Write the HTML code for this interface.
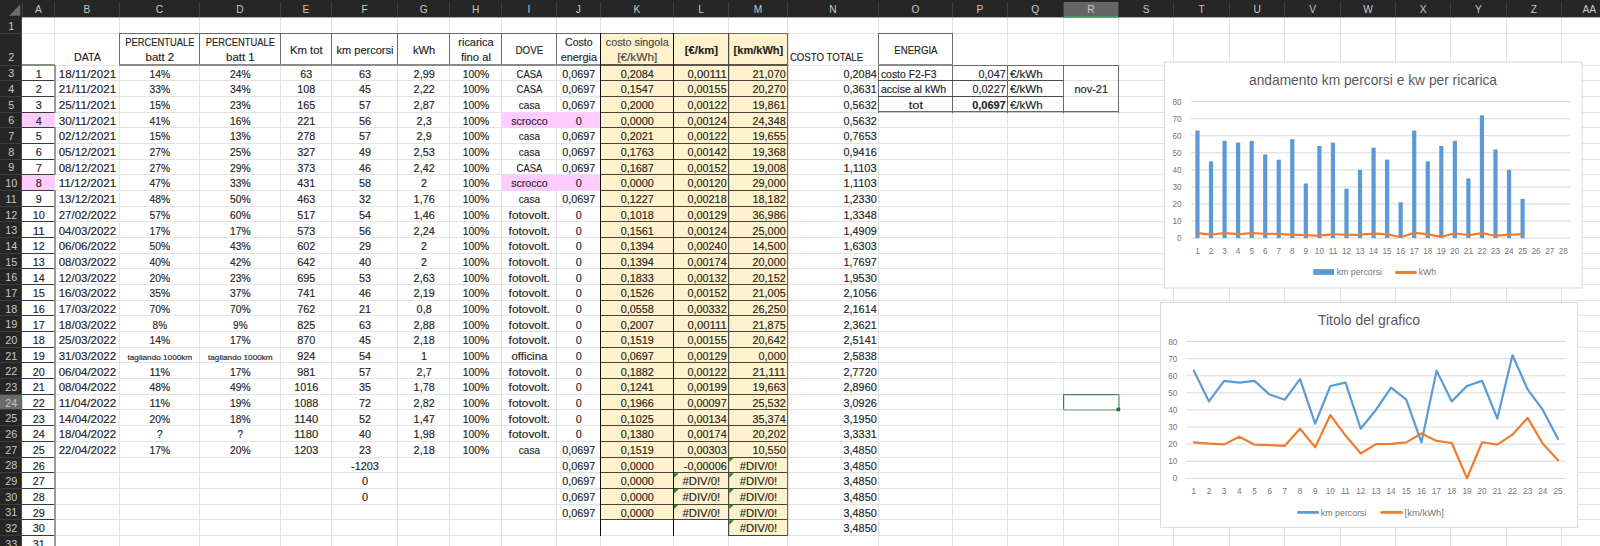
<!DOCTYPE html>
<html><head><meta charset="utf-8"><title>Excel</title><style>html,body{margin:0;padding:0;background:#fff;overflow:hidden;width:1600px;height:546px;font-family:"Liberation Sans",sans-serif}</style></head><body>
<svg width="1600" height="546" viewBox="0 0 1600 546" style="display:block">
<rect x="0" y="0" width="1600" height="546" fill="#ffffff"/>
<rect x="54" y="17" width="1" height="529" fill="#e3e3e3"/><rect x="119" y="17" width="1" height="529" fill="#e3e3e3"/><rect x="199" y="17" width="1" height="529" fill="#e3e3e3"/><rect x="280" y="17" width="1" height="529" fill="#e3e3e3"/><rect x="331" y="17" width="1" height="529" fill="#e3e3e3"/><rect x="397" y="17" width="1" height="529" fill="#e3e3e3"/><rect x="449" y="17" width="1" height="529" fill="#e3e3e3"/><rect x="501" y="17" width="1" height="529" fill="#e3e3e3"/><rect x="556" y="17" width="1" height="529" fill="#e3e3e3"/><rect x="600" y="17" width="1" height="529" fill="#e3e3e3"/><rect x="673" y="17" width="1" height="529" fill="#e3e3e3"/><rect x="728" y="17" width="1" height="529" fill="#e3e3e3"/><rect x="787" y="17" width="1" height="529" fill="#e3e3e3"/><rect x="878" y="17" width="1" height="529" fill="#e3e3e3"/><rect x="952" y="17" width="1" height="529" fill="#e3e3e3"/><rect x="1007" y="17" width="1" height="529" fill="#e3e3e3"/><rect x="1063" y="17" width="1" height="529" fill="#e3e3e3"/><rect x="1118" y="17" width="1" height="529" fill="#e3e3e3"/><rect x="1173" y="17" width="1" height="529" fill="#e3e3e3"/><rect x="1229" y="17" width="1" height="529" fill="#e3e3e3"/><rect x="1284" y="17" width="1" height="529" fill="#e3e3e3"/><rect x="1340" y="17" width="1" height="529" fill="#e3e3e3"/><rect x="1395" y="17" width="1" height="529" fill="#e3e3e3"/><rect x="1450" y="17" width="1" height="529" fill="#e3e3e3"/><rect x="1506" y="17" width="1" height="529" fill="#e3e3e3"/><rect x="1561" y="17" width="1" height="529" fill="#e3e3e3"/><rect x="1617" y="17" width="1" height="529" fill="#e3e3e3"/><rect x="22" y="33" width="1578" height="1" fill="#e3e3e3"/><rect x="22" y="65" width="1578" height="1" fill="#e3e3e3"/><rect x="22" y="80" width="1578" height="1" fill="#e3e3e3"/><rect x="22" y="96" width="1578" height="1" fill="#e3e3e3"/><rect x="22" y="112" width="1578" height="1" fill="#e3e3e3"/><rect x="22" y="127" width="1578" height="1" fill="#e3e3e3"/><rect x="22" y="143" width="1578" height="1" fill="#e3e3e3"/><rect x="22" y="159" width="1578" height="1" fill="#e3e3e3"/><rect x="22" y="174" width="1578" height="1" fill="#e3e3e3"/><rect x="22" y="190" width="1578" height="1" fill="#e3e3e3"/><rect x="22" y="206" width="1578" height="1" fill="#e3e3e3"/><rect x="22" y="221" width="1578" height="1" fill="#e3e3e3"/><rect x="22" y="237" width="1578" height="1" fill="#e3e3e3"/><rect x="22" y="253" width="1578" height="1" fill="#e3e3e3"/><rect x="22" y="268" width="1578" height="1" fill="#e3e3e3"/><rect x="22" y="284" width="1578" height="1" fill="#e3e3e3"/><rect x="22" y="300" width="1578" height="1" fill="#e3e3e3"/><rect x="22" y="315" width="1578" height="1" fill="#e3e3e3"/><rect x="22" y="331" width="1578" height="1" fill="#e3e3e3"/><rect x="22" y="347" width="1578" height="1" fill="#e3e3e3"/><rect x="22" y="362" width="1578" height="1" fill="#e3e3e3"/><rect x="22" y="378" width="1578" height="1" fill="#e3e3e3"/><rect x="22" y="394" width="1578" height="1" fill="#e3e3e3"/><rect x="22" y="409" width="1578" height="1" fill="#e3e3e3"/><rect x="22" y="425" width="1578" height="1" fill="#e3e3e3"/><rect x="22" y="441" width="1578" height="1" fill="#e3e3e3"/><rect x="22" y="457" width="1578" height="1" fill="#e3e3e3"/><rect x="22" y="472" width="1578" height="1" fill="#e3e3e3"/><rect x="22" y="488" width="1578" height="1" fill="#e3e3e3"/><rect x="22" y="504" width="1578" height="1" fill="#e3e3e3"/><rect x="22" y="519" width="1578" height="1" fill="#e3e3e3"/><rect x="22" y="535" width="1578" height="1" fill="#e3e3e3"/><rect x="22" y="551" width="1578" height="1" fill="#e3e3e3"/>
<rect x="600.30" y="33.50" width="187.20" height="486.22" fill="#fff2cc"/>
<rect x="728.50" y="519.72" width="59.00" height="15.68" fill="#fff2cc"/>
<rect x="22.00" y="112.04" width="32.60" height="15.68" fill="#ffccff"/>
<rect x="501.50" y="112.04" width="98.80" height="15.68" fill="#ffccff"/>
<rect x="22.00" y="174.76" width="32.60" height="15.68" fill="#ffccff"/>
<rect x="501.50" y="174.76" width="98.80" height="15.68" fill="#ffccff"/>
<rect x="119" y="33" width="669" height="1" fill="#6a6a6a"/>
<rect x="119" y="33" width="1" height="33" fill="#6a6a6a"/>
<rect x="199" y="33" width="1" height="33" fill="#6a6a6a"/>
<rect x="280" y="33" width="1" height="33" fill="#6a6a6a"/>
<rect x="331" y="33" width="1" height="33" fill="#6a6a6a"/>
<rect x="397" y="33" width="1" height="33" fill="#6a6a6a"/>
<rect x="449" y="33" width="1" height="33" fill="#6a6a6a"/>
<rect x="501" y="33" width="1" height="33" fill="#6a6a6a"/>
<rect x="556" y="33" width="1" height="33" fill="#6a6a6a"/>
<rect x="119" y="64" width="482" height="2" fill="#8a8a8a"/>
<rect x="600" y="64" width="188" height="2" fill="#5c5646"/>
<rect x="600" y="80" width="188" height="1" fill="#45433c"/>
<rect x="600" y="96" width="188" height="1" fill="#45433c"/>
<rect x="600" y="112" width="188" height="1" fill="#45433c"/>
<rect x="600" y="127" width="188" height="1" fill="#45433c"/>
<rect x="600" y="143" width="188" height="1" fill="#45433c"/>
<rect x="600" y="159" width="188" height="1" fill="#45433c"/>
<rect x="600" y="174" width="188" height="1" fill="#45433c"/>
<rect x="600" y="190" width="188" height="1" fill="#45433c"/>
<rect x="600" y="206" width="188" height="1" fill="#45433c"/>
<rect x="600" y="221" width="188" height="1" fill="#45433c"/>
<rect x="600" y="237" width="188" height="1" fill="#45433c"/>
<rect x="600" y="253" width="188" height="1" fill="#45433c"/>
<rect x="600" y="268" width="188" height="1" fill="#45433c"/>
<rect x="600" y="284" width="188" height="1" fill="#45433c"/>
<rect x="600" y="300" width="188" height="1" fill="#45433c"/>
<rect x="600" y="315" width="188" height="1" fill="#45433c"/>
<rect x="600" y="331" width="188" height="1" fill="#45433c"/>
<rect x="600" y="347" width="188" height="1" fill="#45433c"/>
<rect x="600" y="362" width="188" height="1" fill="#45433c"/>
<rect x="600" y="378" width="188" height="1" fill="#45433c"/>
<rect x="600" y="394" width="188" height="1" fill="#45433c"/>
<rect x="600" y="409" width="188" height="1" fill="#45433c"/>
<rect x="600" y="425" width="188" height="1" fill="#45433c"/>
<rect x="600" y="441" width="188" height="1" fill="#45433c"/>
<rect x="600" y="457" width="188" height="1" fill="#45433c"/>
<rect x="600" y="472" width="188" height="1" fill="#45433c"/>
<rect x="600" y="488" width="188" height="1" fill="#45433c"/>
<rect x="600" y="504" width="188" height="1" fill="#45433c"/>
<rect x="600" y="519" width="188" height="1" fill="#45433c"/>
<rect x="728" y="535" width="60" height="1" fill="#45433c"/>
<rect x="600" y="33" width="1" height="503" fill="#0c0c0c"/>
<rect x="673" y="33" width="1" height="503" fill="#0c0c0c"/>
<rect x="728" y="33" width="1.2" height="503" fill="#4a4a4a"/>
<rect x="787" y="33" width="1.2" height="503" fill="#6a6a6a"/>
<rect x="22" y="64" width="33" height="2" fill="#8a8a8a"/>
<rect x="22" y="80" width="33" height="1" fill="#3a3a3a"/>
<rect x="22" y="96" width="33" height="1" fill="#3a3a3a"/>
<rect x="22" y="112" width="33" height="1" fill="#3a3a3a"/>
<rect x="22" y="127" width="33" height="1" fill="#3a3a3a"/>
<rect x="22" y="143" width="33" height="1" fill="#3a3a3a"/>
<rect x="22" y="159" width="33" height="1" fill="#3a3a3a"/>
<rect x="22" y="174" width="33" height="1" fill="#3a3a3a"/>
<rect x="22" y="190" width="33" height="1" fill="#3a3a3a"/>
<rect x="22" y="206" width="33" height="1" fill="#3a3a3a"/>
<rect x="22" y="221" width="33" height="1" fill="#3a3a3a"/>
<rect x="22" y="237" width="33" height="1" fill="#3a3a3a"/>
<rect x="22" y="253" width="33" height="1" fill="#3a3a3a"/>
<rect x="22" y="268" width="33" height="1" fill="#3a3a3a"/>
<rect x="22" y="284" width="33" height="1" fill="#3a3a3a"/>
<rect x="22" y="300" width="33" height="1" fill="#3a3a3a"/>
<rect x="22" y="315" width="33" height="1" fill="#3a3a3a"/>
<rect x="22" y="331" width="33" height="1" fill="#3a3a3a"/>
<rect x="22" y="347" width="33" height="1" fill="#3a3a3a"/>
<rect x="22" y="362" width="33" height="1" fill="#3a3a3a"/>
<rect x="22" y="378" width="33" height="1" fill="#3a3a3a"/>
<rect x="22" y="394" width="33" height="1" fill="#3a3a3a"/>
<rect x="22" y="409" width="33" height="1" fill="#3a3a3a"/>
<rect x="22" y="425" width="33" height="1" fill="#3a3a3a"/>
<rect x="22" y="441" width="33" height="1" fill="#3a3a3a"/>
<rect x="22" y="457" width="33" height="1" fill="#3a3a3a"/>
<rect x="22" y="472" width="33" height="1" fill="#3a3a3a"/>
<rect x="22" y="488" width="33" height="1" fill="#3a3a3a"/>
<rect x="22" y="504" width="33" height="1" fill="#3a3a3a"/>
<rect x="22" y="519" width="33" height="1" fill="#3a3a3a"/>
<rect x="22" y="535" width="33" height="1" fill="#3a3a3a"/>
<rect x="22" y="551" width="33" height="1" fill="#3a3a3a"/>
<rect x="54" y="65" width="2" height="48" fill="#9a9a9a"/>
<rect x="54" y="127" width="2" height="48" fill="#9a9a9a"/>
<rect x="54" y="190" width="2" height="357" fill="#9a9a9a"/>
<rect x="878" y="33" width="75" height="1" fill="#6a6a6a"/>
<rect x="878" y="33" width="1" height="80" fill="#6a6a6a"/>
<rect x="952" y="33" width="1" height="80" fill="#6a6a6a"/>
<rect x="878" y="64" width="75" height="2" fill="#8a8a8a"/>
<rect x="952" y="65" width="112" height="1" fill="#6a6a6a"/>
<rect x="878" y="80" width="186" height="1" fill="#4a4a4a"/>
<rect x="878" y="96" width="186" height="1" fill="#4a4a4a"/>
<rect x="878" y="111" width="241" height="1.2" fill="#6a6a6a"/>
<rect x="1007" y="65" width="1" height="48" fill="#6a6a6a"/>
<rect x="1063" y="65" width="1" height="48" fill="#6a6a6a"/>
<rect x="1063" y="65" width="56" height="1" fill="#6a6a6a"/>
<rect x="1118" y="65" width="1" height="48" fill="#6a6a6a"/>
<g font-family="Liberation Sans, sans-serif">
<text x="87.40" y="60.70" text-anchor="middle" font-size="10.5" fill="#242424" stroke="#242424" stroke-width="0.15" textLength="26.89" lengthAdjust="spacingAndGlyphs">DATA</text>
<text x="159.85" y="45.70" text-anchor="middle" font-size="10.5" fill="#242424" stroke="#242424" stroke-width="0.15" textLength="69.39" lengthAdjust="spacingAndGlyphs">PERCENTUALE</text>
<text x="159.85" y="60.70" text-anchor="middle" font-size="10.5" fill="#242424" stroke="#242424" stroke-width="0.15" textLength="28.64" lengthAdjust="spacingAndGlyphs">batt 2</text>
<text x="240.35" y="45.70" text-anchor="middle" font-size="10.5" fill="#242424" stroke="#242424" stroke-width="0.15" textLength="69.39" lengthAdjust="spacingAndGlyphs">PERCENTUALE</text>
<text x="240.35" y="60.70" text-anchor="middle" font-size="10.5" fill="#242424" stroke="#242424" stroke-width="0.15" textLength="28.64" lengthAdjust="spacingAndGlyphs">batt 1</text>
<text x="475.95" y="45.70" text-anchor="middle" font-size="10.5" fill="#242424" stroke="#242424" stroke-width="0.15" textLength="35.22" lengthAdjust="spacingAndGlyphs">ricarica</text>
<text x="475.95" y="60.70" text-anchor="middle" font-size="10.5" fill="#242424" stroke="#242424" stroke-width="0.15" textLength="29.99" lengthAdjust="spacingAndGlyphs">fino al</text>
<text x="578.80" y="45.70" text-anchor="middle" font-size="10.5" fill="#242424" stroke="#242424" stroke-width="0.15" textLength="27.52" lengthAdjust="spacingAndGlyphs">Costo</text>
<text x="578.80" y="60.70" text-anchor="middle" font-size="10.5" fill="#242424" stroke="#242424" stroke-width="0.15" textLength="36.28" lengthAdjust="spacingAndGlyphs">energia</text>
<text x="637.25" y="45.70" text-anchor="middle" font-size="10.5" fill="#474747" stroke="#474747" stroke-width="0.15" textLength="62.83" lengthAdjust="spacingAndGlyphs">costo singola</text>
<text x="637.25" y="60.70" text-anchor="middle" font-size="10.5" fill="#474747" stroke="#474747" stroke-width="0.15" textLength="40.14" lengthAdjust="spacingAndGlyphs">[€/kWh]</text>
<text x="306.25" y="53.90" text-anchor="middle" font-size="10.5" fill="#242424" stroke="#242424" stroke-width="0.15" textLength="32.63" lengthAdjust="spacingAndGlyphs">Km tot</text>
<text x="365.00" y="53.90" text-anchor="middle" font-size="10.5" fill="#242424" stroke="#242424" stroke-width="0.15" textLength="56.77" lengthAdjust="spacingAndGlyphs">km percorsi</text>
<text x="424.15" y="53.90" text-anchor="middle" font-size="10.5" fill="#242424" stroke="#242424" stroke-width="0.15" textLength="22.25" lengthAdjust="spacingAndGlyphs">kWh</text>
<text x="529.40" y="53.90" text-anchor="middle" font-size="10.5" fill="#242424" stroke="#242424" stroke-width="0.15" textLength="27.75" lengthAdjust="spacingAndGlyphs">DOVE</text>
<text x="701.35" y="53.90" text-anchor="middle" font-size="10.5" fill="#242424" stroke="#242424" stroke-width="0.15" font-weight="bold" textLength="33.20" lengthAdjust="spacingAndGlyphs">[€/km]</text>
<text x="758.40" y="53.90" text-anchor="middle" font-size="10.5" fill="#242424" stroke="#242424" stroke-width="0.15" font-weight="bold" textLength="49.62" lengthAdjust="spacingAndGlyphs">[km/kWh]</text>
<text x="789.90" y="60.70" text-anchor="start" font-size="10.5" fill="#242424" stroke="#242424" stroke-width="0.15" textLength="73.21" lengthAdjust="spacingAndGlyphs">COSTO TOTALE</text>
<text x="915.90" y="53.90" text-anchor="middle" font-size="10.5" fill="#242424" stroke="#242424" stroke-width="0.15" textLength="43.16" lengthAdjust="spacingAndGlyphs">ENERGIA</text>
<text x="87.40" y="77.73" text-anchor="middle" font-size="10.5" fill="#242424" stroke="#242424" stroke-width="0.15" textLength="57.45" lengthAdjust="spacingAndGlyphs">18/11/2021</text>
<text x="159.85" y="77.73" text-anchor="middle" font-size="10.5" fill="#242424" stroke="#242424" stroke-width="0.15" textLength="20.58" lengthAdjust="spacingAndGlyphs">14%</text>
<text x="240.35" y="77.73" text-anchor="middle" font-size="10.5" fill="#242424" stroke="#242424" stroke-width="0.15" textLength="20.58" lengthAdjust="spacingAndGlyphs">24%</text>
<text x="306.25" y="77.73" text-anchor="middle" font-size="10.5" fill="#242424" stroke="#242424" stroke-width="0.15" textLength="12.07" lengthAdjust="spacingAndGlyphs">63</text>
<text x="365.00" y="77.73" text-anchor="middle" font-size="10.5" fill="#242424" stroke="#242424" stroke-width="0.15" textLength="12.07" lengthAdjust="spacingAndGlyphs">63</text>
<text x="424.15" y="77.73" text-anchor="middle" font-size="10.5" fill="#242424" stroke="#242424" stroke-width="0.15" textLength="21.07" lengthAdjust="spacingAndGlyphs">2,99</text>
<text x="475.95" y="77.73" text-anchor="middle" font-size="10.5" fill="#242424" stroke="#242424" stroke-width="0.15" textLength="26.61" lengthAdjust="spacingAndGlyphs">100%</text>
<text x="529.40" y="77.73" text-anchor="middle" font-size="10.5" fill="#242424" stroke="#242424" stroke-width="0.15" textLength="25.59" lengthAdjust="spacingAndGlyphs">CASA</text>
<text x="578.80" y="77.73" text-anchor="middle" font-size="10.5" fill="#242424" stroke="#242424" stroke-width="0.15" textLength="33.14" lengthAdjust="spacingAndGlyphs">0,0697</text>
<text x="637.25" y="77.73" text-anchor="middle" font-size="10.5" fill="#242424" stroke="#242424" stroke-width="0.15" textLength="33.14" lengthAdjust="spacingAndGlyphs">0,2084</text>
<text x="726.70" y="77.73" text-anchor="end" font-size="10.5" fill="#242424" stroke="#242424" stroke-width="0.15" textLength="39.17" lengthAdjust="spacingAndGlyphs">0,00111</text>
<text x="785.70" y="77.73" text-anchor="end" font-size="10.5" fill="#242424" stroke="#242424" stroke-width="0.15" textLength="33.14" lengthAdjust="spacingAndGlyphs">21,070</text>
<text x="876.70" y="77.73" text-anchor="end" font-size="10.5" fill="#242424" stroke="#242424" stroke-width="0.15" textLength="33.14" lengthAdjust="spacingAndGlyphs">0,2084</text>
<text x="87.40" y="93.41" text-anchor="middle" font-size="10.5" fill="#242424" stroke="#242424" stroke-width="0.15" textLength="57.45" lengthAdjust="spacingAndGlyphs">21/11/2021</text>
<text x="159.85" y="93.41" text-anchor="middle" font-size="10.5" fill="#242424" stroke="#242424" stroke-width="0.15" textLength="20.58" lengthAdjust="spacingAndGlyphs">33%</text>
<text x="240.35" y="93.41" text-anchor="middle" font-size="10.5" fill="#242424" stroke="#242424" stroke-width="0.15" textLength="20.58" lengthAdjust="spacingAndGlyphs">34%</text>
<text x="306.25" y="93.41" text-anchor="middle" font-size="10.5" fill="#242424" stroke="#242424" stroke-width="0.15" textLength="18.10" lengthAdjust="spacingAndGlyphs">108</text>
<text x="365.00" y="93.41" text-anchor="middle" font-size="10.5" fill="#242424" stroke="#242424" stroke-width="0.15" textLength="12.07" lengthAdjust="spacingAndGlyphs">45</text>
<text x="424.15" y="93.41" text-anchor="middle" font-size="10.5" fill="#242424" stroke="#242424" stroke-width="0.15" textLength="21.07" lengthAdjust="spacingAndGlyphs">2,22</text>
<text x="475.95" y="93.41" text-anchor="middle" font-size="10.5" fill="#242424" stroke="#242424" stroke-width="0.15" textLength="26.61" lengthAdjust="spacingAndGlyphs">100%</text>
<text x="529.40" y="93.41" text-anchor="middle" font-size="10.5" fill="#242424" stroke="#242424" stroke-width="0.15" textLength="25.59" lengthAdjust="spacingAndGlyphs">CASA</text>
<text x="578.80" y="93.41" text-anchor="middle" font-size="10.5" fill="#242424" stroke="#242424" stroke-width="0.15" textLength="33.14" lengthAdjust="spacingAndGlyphs">0,0697</text>
<text x="637.25" y="93.41" text-anchor="middle" font-size="10.5" fill="#242424" stroke="#242424" stroke-width="0.15" textLength="33.14" lengthAdjust="spacingAndGlyphs">0,1547</text>
<text x="726.70" y="93.41" text-anchor="end" font-size="10.5" fill="#242424" stroke="#242424" stroke-width="0.15" textLength="39.17" lengthAdjust="spacingAndGlyphs">0,00155</text>
<text x="785.70" y="93.41" text-anchor="end" font-size="10.5" fill="#242424" stroke="#242424" stroke-width="0.15" textLength="33.14" lengthAdjust="spacingAndGlyphs">20,270</text>
<text x="876.70" y="93.41" text-anchor="end" font-size="10.5" fill="#242424" stroke="#242424" stroke-width="0.15" textLength="33.14" lengthAdjust="spacingAndGlyphs">0,3631</text>
<text x="87.40" y="109.09" text-anchor="middle" font-size="10.5" fill="#242424" stroke="#242424" stroke-width="0.15" textLength="57.45" lengthAdjust="spacingAndGlyphs">25/11/2021</text>
<text x="159.85" y="109.09" text-anchor="middle" font-size="10.5" fill="#242424" stroke="#242424" stroke-width="0.15" textLength="20.58" lengthAdjust="spacingAndGlyphs">15%</text>
<text x="240.35" y="109.09" text-anchor="middle" font-size="10.5" fill="#242424" stroke="#242424" stroke-width="0.15" textLength="20.58" lengthAdjust="spacingAndGlyphs">23%</text>
<text x="306.25" y="109.09" text-anchor="middle" font-size="10.5" fill="#242424" stroke="#242424" stroke-width="0.15" textLength="18.10" lengthAdjust="spacingAndGlyphs">165</text>
<text x="365.00" y="109.09" text-anchor="middle" font-size="10.5" fill="#242424" stroke="#242424" stroke-width="0.15" textLength="12.07" lengthAdjust="spacingAndGlyphs">57</text>
<text x="424.15" y="109.09" text-anchor="middle" font-size="10.5" fill="#242424" stroke="#242424" stroke-width="0.15" textLength="21.07" lengthAdjust="spacingAndGlyphs">2,87</text>
<text x="475.95" y="109.09" text-anchor="middle" font-size="10.5" fill="#242424" stroke="#242424" stroke-width="0.15" textLength="26.61" lengthAdjust="spacingAndGlyphs">100%</text>
<text x="529.40" y="109.09" text-anchor="middle" font-size="10.5" fill="#242424" stroke="#242424" stroke-width="0.15" textLength="21.09" lengthAdjust="spacingAndGlyphs">casa</text>
<text x="578.80" y="109.09" text-anchor="middle" font-size="10.5" fill="#242424" stroke="#242424" stroke-width="0.15" textLength="33.14" lengthAdjust="spacingAndGlyphs">0,0697</text>
<text x="637.25" y="109.09" text-anchor="middle" font-size="10.5" fill="#242424" stroke="#242424" stroke-width="0.15" textLength="33.14" lengthAdjust="spacingAndGlyphs">0,2000</text>
<text x="726.70" y="109.09" text-anchor="end" font-size="10.5" fill="#242424" stroke="#242424" stroke-width="0.15" textLength="39.17" lengthAdjust="spacingAndGlyphs">0,00122</text>
<text x="785.70" y="109.09" text-anchor="end" font-size="10.5" fill="#242424" stroke="#242424" stroke-width="0.15" textLength="33.14" lengthAdjust="spacingAndGlyphs">19,861</text>
<text x="876.70" y="109.09" text-anchor="end" font-size="10.5" fill="#242424" stroke="#242424" stroke-width="0.15" textLength="33.14" lengthAdjust="spacingAndGlyphs">0,5632</text>
<text x="87.40" y="124.77" text-anchor="middle" font-size="10.5" fill="#242424" stroke="#242424" stroke-width="0.15" textLength="57.45" lengthAdjust="spacingAndGlyphs">30/11/2021</text>
<text x="159.85" y="124.77" text-anchor="middle" font-size="10.5" fill="#242424" stroke="#242424" stroke-width="0.15" textLength="20.58" lengthAdjust="spacingAndGlyphs">41%</text>
<text x="240.35" y="124.77" text-anchor="middle" font-size="10.5" fill="#242424" stroke="#242424" stroke-width="0.15" textLength="20.58" lengthAdjust="spacingAndGlyphs">16%</text>
<text x="306.25" y="124.77" text-anchor="middle" font-size="10.5" fill="#242424" stroke="#242424" stroke-width="0.15" textLength="18.10" lengthAdjust="spacingAndGlyphs">221</text>
<text x="365.00" y="124.77" text-anchor="middle" font-size="10.5" fill="#242424" stroke="#242424" stroke-width="0.15" textLength="12.07" lengthAdjust="spacingAndGlyphs">56</text>
<text x="424.15" y="124.77" text-anchor="middle" font-size="10.5" fill="#242424" stroke="#242424" stroke-width="0.15" textLength="15.04" lengthAdjust="spacingAndGlyphs">2,3</text>
<text x="475.95" y="124.77" text-anchor="middle" font-size="10.5" fill="#242424" stroke="#242424" stroke-width="0.15" textLength="26.61" lengthAdjust="spacingAndGlyphs">100%</text>
<text x="529.40" y="124.77" text-anchor="middle" font-size="10.5" fill="#242424" stroke="#242424" stroke-width="0.15" textLength="36.45" lengthAdjust="spacingAndGlyphs">scrocco</text>
<text x="578.80" y="124.77" text-anchor="middle" font-size="10.5" fill="#242424" stroke="#242424" stroke-width="0.15" textLength="6.03" lengthAdjust="spacingAndGlyphs">0</text>
<text x="637.25" y="124.77" text-anchor="middle" font-size="10.5" fill="#242424" stroke="#242424" stroke-width="0.15" textLength="33.14" lengthAdjust="spacingAndGlyphs">0,0000</text>
<text x="726.70" y="124.77" text-anchor="end" font-size="10.5" fill="#242424" stroke="#242424" stroke-width="0.15" textLength="39.17" lengthAdjust="spacingAndGlyphs">0,00124</text>
<text x="785.70" y="124.77" text-anchor="end" font-size="10.5" fill="#242424" stroke="#242424" stroke-width="0.15" textLength="33.14" lengthAdjust="spacingAndGlyphs">24,348</text>
<text x="876.70" y="124.77" text-anchor="end" font-size="10.5" fill="#242424" stroke="#242424" stroke-width="0.15" textLength="33.14" lengthAdjust="spacingAndGlyphs">0,5632</text>
<text x="87.40" y="140.45" text-anchor="middle" font-size="10.5" fill="#242424" stroke="#242424" stroke-width="0.15" textLength="57.45" lengthAdjust="spacingAndGlyphs">02/12/2021</text>
<text x="159.85" y="140.45" text-anchor="middle" font-size="10.5" fill="#242424" stroke="#242424" stroke-width="0.15" textLength="20.58" lengthAdjust="spacingAndGlyphs">15%</text>
<text x="240.35" y="140.45" text-anchor="middle" font-size="10.5" fill="#242424" stroke="#242424" stroke-width="0.15" textLength="20.58" lengthAdjust="spacingAndGlyphs">13%</text>
<text x="306.25" y="140.45" text-anchor="middle" font-size="10.5" fill="#242424" stroke="#242424" stroke-width="0.15" textLength="18.10" lengthAdjust="spacingAndGlyphs">278</text>
<text x="365.00" y="140.45" text-anchor="middle" font-size="10.5" fill="#242424" stroke="#242424" stroke-width="0.15" textLength="12.07" lengthAdjust="spacingAndGlyphs">57</text>
<text x="424.15" y="140.45" text-anchor="middle" font-size="10.5" fill="#242424" stroke="#242424" stroke-width="0.15" textLength="15.04" lengthAdjust="spacingAndGlyphs">2,9</text>
<text x="475.95" y="140.45" text-anchor="middle" font-size="10.5" fill="#242424" stroke="#242424" stroke-width="0.15" textLength="26.61" lengthAdjust="spacingAndGlyphs">100%</text>
<text x="529.40" y="140.45" text-anchor="middle" font-size="10.5" fill="#242424" stroke="#242424" stroke-width="0.15" textLength="21.09" lengthAdjust="spacingAndGlyphs">casa</text>
<text x="578.80" y="140.45" text-anchor="middle" font-size="10.5" fill="#242424" stroke="#242424" stroke-width="0.15" textLength="33.14" lengthAdjust="spacingAndGlyphs">0,0697</text>
<text x="637.25" y="140.45" text-anchor="middle" font-size="10.5" fill="#242424" stroke="#242424" stroke-width="0.15" textLength="33.14" lengthAdjust="spacingAndGlyphs">0,2021</text>
<text x="726.70" y="140.45" text-anchor="end" font-size="10.5" fill="#242424" stroke="#242424" stroke-width="0.15" textLength="39.17" lengthAdjust="spacingAndGlyphs">0,00122</text>
<text x="785.70" y="140.45" text-anchor="end" font-size="10.5" fill="#242424" stroke="#242424" stroke-width="0.15" textLength="33.14" lengthAdjust="spacingAndGlyphs">19,655</text>
<text x="876.70" y="140.45" text-anchor="end" font-size="10.5" fill="#242424" stroke="#242424" stroke-width="0.15" textLength="33.14" lengthAdjust="spacingAndGlyphs">0,7653</text>
<text x="87.40" y="156.13" text-anchor="middle" font-size="10.5" fill="#242424" stroke="#242424" stroke-width="0.15" textLength="57.45" lengthAdjust="spacingAndGlyphs">05/12/2021</text>
<text x="159.85" y="156.13" text-anchor="middle" font-size="10.5" fill="#242424" stroke="#242424" stroke-width="0.15" textLength="20.58" lengthAdjust="spacingAndGlyphs">27%</text>
<text x="240.35" y="156.13" text-anchor="middle" font-size="10.5" fill="#242424" stroke="#242424" stroke-width="0.15" textLength="20.58" lengthAdjust="spacingAndGlyphs">25%</text>
<text x="306.25" y="156.13" text-anchor="middle" font-size="10.5" fill="#242424" stroke="#242424" stroke-width="0.15" textLength="18.10" lengthAdjust="spacingAndGlyphs">327</text>
<text x="365.00" y="156.13" text-anchor="middle" font-size="10.5" fill="#242424" stroke="#242424" stroke-width="0.15" textLength="12.07" lengthAdjust="spacingAndGlyphs">49</text>
<text x="424.15" y="156.13" text-anchor="middle" font-size="10.5" fill="#242424" stroke="#242424" stroke-width="0.15" textLength="21.07" lengthAdjust="spacingAndGlyphs">2,53</text>
<text x="475.95" y="156.13" text-anchor="middle" font-size="10.5" fill="#242424" stroke="#242424" stroke-width="0.15" textLength="26.61" lengthAdjust="spacingAndGlyphs">100%</text>
<text x="529.40" y="156.13" text-anchor="middle" font-size="10.5" fill="#242424" stroke="#242424" stroke-width="0.15" textLength="21.09" lengthAdjust="spacingAndGlyphs">casa</text>
<text x="578.80" y="156.13" text-anchor="middle" font-size="10.5" fill="#242424" stroke="#242424" stroke-width="0.15" textLength="33.14" lengthAdjust="spacingAndGlyphs">0,0697</text>
<text x="637.25" y="156.13" text-anchor="middle" font-size="10.5" fill="#242424" stroke="#242424" stroke-width="0.15" textLength="33.14" lengthAdjust="spacingAndGlyphs">0,1763</text>
<text x="726.70" y="156.13" text-anchor="end" font-size="10.5" fill="#242424" stroke="#242424" stroke-width="0.15" textLength="39.17" lengthAdjust="spacingAndGlyphs">0,00142</text>
<text x="785.70" y="156.13" text-anchor="end" font-size="10.5" fill="#242424" stroke="#242424" stroke-width="0.15" textLength="33.14" lengthAdjust="spacingAndGlyphs">19,368</text>
<text x="876.70" y="156.13" text-anchor="end" font-size="10.5" fill="#242424" stroke="#242424" stroke-width="0.15" textLength="33.14" lengthAdjust="spacingAndGlyphs">0,9416</text>
<text x="87.40" y="171.81" text-anchor="middle" font-size="10.5" fill="#242424" stroke="#242424" stroke-width="0.15" textLength="57.45" lengthAdjust="spacingAndGlyphs">08/12/2021</text>
<text x="159.85" y="171.81" text-anchor="middle" font-size="10.5" fill="#242424" stroke="#242424" stroke-width="0.15" textLength="20.58" lengthAdjust="spacingAndGlyphs">27%</text>
<text x="240.35" y="171.81" text-anchor="middle" font-size="10.5" fill="#242424" stroke="#242424" stroke-width="0.15" textLength="20.58" lengthAdjust="spacingAndGlyphs">29%</text>
<text x="306.25" y="171.81" text-anchor="middle" font-size="10.5" fill="#242424" stroke="#242424" stroke-width="0.15" textLength="18.10" lengthAdjust="spacingAndGlyphs">373</text>
<text x="365.00" y="171.81" text-anchor="middle" font-size="10.5" fill="#242424" stroke="#242424" stroke-width="0.15" textLength="12.07" lengthAdjust="spacingAndGlyphs">46</text>
<text x="424.15" y="171.81" text-anchor="middle" font-size="10.5" fill="#242424" stroke="#242424" stroke-width="0.15" textLength="21.07" lengthAdjust="spacingAndGlyphs">2,42</text>
<text x="475.95" y="171.81" text-anchor="middle" font-size="10.5" fill="#242424" stroke="#242424" stroke-width="0.15" textLength="26.61" lengthAdjust="spacingAndGlyphs">100%</text>
<text x="529.40" y="171.81" text-anchor="middle" font-size="10.5" fill="#242424" stroke="#242424" stroke-width="0.15" textLength="25.59" lengthAdjust="spacingAndGlyphs">CASA</text>
<text x="578.80" y="171.81" text-anchor="middle" font-size="10.5" fill="#242424" stroke="#242424" stroke-width="0.15" textLength="33.14" lengthAdjust="spacingAndGlyphs">0,0697</text>
<text x="637.25" y="171.81" text-anchor="middle" font-size="10.5" fill="#242424" stroke="#242424" stroke-width="0.15" textLength="33.14" lengthAdjust="spacingAndGlyphs">0,1687</text>
<text x="726.70" y="171.81" text-anchor="end" font-size="10.5" fill="#242424" stroke="#242424" stroke-width="0.15" textLength="39.17" lengthAdjust="spacingAndGlyphs">0,00152</text>
<text x="785.70" y="171.81" text-anchor="end" font-size="10.5" fill="#242424" stroke="#242424" stroke-width="0.15" textLength="33.14" lengthAdjust="spacingAndGlyphs">19,008</text>
<text x="876.70" y="171.81" text-anchor="end" font-size="10.5" fill="#242424" stroke="#242424" stroke-width="0.15" textLength="33.14" lengthAdjust="spacingAndGlyphs">1,1103</text>
<text x="87.40" y="187.49" text-anchor="middle" font-size="10.5" fill="#242424" stroke="#242424" stroke-width="0.15" textLength="57.45" lengthAdjust="spacingAndGlyphs">11/12/2021</text>
<text x="159.85" y="187.49" text-anchor="middle" font-size="10.5" fill="#242424" stroke="#242424" stroke-width="0.15" textLength="20.58" lengthAdjust="spacingAndGlyphs">47%</text>
<text x="240.35" y="187.49" text-anchor="middle" font-size="10.5" fill="#242424" stroke="#242424" stroke-width="0.15" textLength="20.58" lengthAdjust="spacingAndGlyphs">33%</text>
<text x="306.25" y="187.49" text-anchor="middle" font-size="10.5" fill="#242424" stroke="#242424" stroke-width="0.15" textLength="18.10" lengthAdjust="spacingAndGlyphs">431</text>
<text x="365.00" y="187.49" text-anchor="middle" font-size="10.5" fill="#242424" stroke="#242424" stroke-width="0.15" textLength="12.07" lengthAdjust="spacingAndGlyphs">58</text>
<text x="424.15" y="187.49" text-anchor="middle" font-size="10.5" fill="#242424" stroke="#242424" stroke-width="0.15" textLength="6.03" lengthAdjust="spacingAndGlyphs">2</text>
<text x="475.95" y="187.49" text-anchor="middle" font-size="10.5" fill="#242424" stroke="#242424" stroke-width="0.15" textLength="26.61" lengthAdjust="spacingAndGlyphs">100%</text>
<text x="529.40" y="187.49" text-anchor="middle" font-size="10.5" fill="#242424" stroke="#242424" stroke-width="0.15" textLength="36.45" lengthAdjust="spacingAndGlyphs">scrocco</text>
<text x="578.80" y="187.49" text-anchor="middle" font-size="10.5" fill="#242424" stroke="#242424" stroke-width="0.15" textLength="6.03" lengthAdjust="spacingAndGlyphs">0</text>
<text x="637.25" y="187.49" text-anchor="middle" font-size="10.5" fill="#242424" stroke="#242424" stroke-width="0.15" textLength="33.14" lengthAdjust="spacingAndGlyphs">0,0000</text>
<text x="726.70" y="187.49" text-anchor="end" font-size="10.5" fill="#242424" stroke="#242424" stroke-width="0.15" textLength="39.17" lengthAdjust="spacingAndGlyphs">0,00120</text>
<text x="785.70" y="187.49" text-anchor="end" font-size="10.5" fill="#242424" stroke="#242424" stroke-width="0.15" textLength="33.14" lengthAdjust="spacingAndGlyphs">29,000</text>
<text x="876.70" y="187.49" text-anchor="end" font-size="10.5" fill="#242424" stroke="#242424" stroke-width="0.15" textLength="33.14" lengthAdjust="spacingAndGlyphs">1,1103</text>
<text x="87.40" y="203.17" text-anchor="middle" font-size="10.5" fill="#242424" stroke="#242424" stroke-width="0.15" textLength="57.45" lengthAdjust="spacingAndGlyphs">13/12/2021</text>
<text x="159.85" y="203.17" text-anchor="middle" font-size="10.5" fill="#242424" stroke="#242424" stroke-width="0.15" textLength="20.58" lengthAdjust="spacingAndGlyphs">48%</text>
<text x="240.35" y="203.17" text-anchor="middle" font-size="10.5" fill="#242424" stroke="#242424" stroke-width="0.15" textLength="20.58" lengthAdjust="spacingAndGlyphs">50%</text>
<text x="306.25" y="203.17" text-anchor="middle" font-size="10.5" fill="#242424" stroke="#242424" stroke-width="0.15" textLength="18.10" lengthAdjust="spacingAndGlyphs">463</text>
<text x="365.00" y="203.17" text-anchor="middle" font-size="10.5" fill="#242424" stroke="#242424" stroke-width="0.15" textLength="12.07" lengthAdjust="spacingAndGlyphs">32</text>
<text x="424.15" y="203.17" text-anchor="middle" font-size="10.5" fill="#242424" stroke="#242424" stroke-width="0.15" textLength="21.07" lengthAdjust="spacingAndGlyphs">1,76</text>
<text x="475.95" y="203.17" text-anchor="middle" font-size="10.5" fill="#242424" stroke="#242424" stroke-width="0.15" textLength="26.61" lengthAdjust="spacingAndGlyphs">100%</text>
<text x="529.40" y="203.17" text-anchor="middle" font-size="10.5" fill="#242424" stroke="#242424" stroke-width="0.15" textLength="21.09" lengthAdjust="spacingAndGlyphs">casa</text>
<text x="578.80" y="203.17" text-anchor="middle" font-size="10.5" fill="#242424" stroke="#242424" stroke-width="0.15" textLength="33.14" lengthAdjust="spacingAndGlyphs">0,0697</text>
<text x="637.25" y="203.17" text-anchor="middle" font-size="10.5" fill="#242424" stroke="#242424" stroke-width="0.15" textLength="33.14" lengthAdjust="spacingAndGlyphs">0,1227</text>
<text x="726.70" y="203.17" text-anchor="end" font-size="10.5" fill="#242424" stroke="#242424" stroke-width="0.15" textLength="39.17" lengthAdjust="spacingAndGlyphs">0,00218</text>
<text x="785.70" y="203.17" text-anchor="end" font-size="10.5" fill="#242424" stroke="#242424" stroke-width="0.15" textLength="33.14" lengthAdjust="spacingAndGlyphs">18,182</text>
<text x="876.70" y="203.17" text-anchor="end" font-size="10.5" fill="#242424" stroke="#242424" stroke-width="0.15" textLength="33.14" lengthAdjust="spacingAndGlyphs">1,2330</text>
<text x="87.40" y="218.85" text-anchor="middle" font-size="10.5" fill="#242424" stroke="#242424" stroke-width="0.15" textLength="57.45" lengthAdjust="spacingAndGlyphs">27/02/2022</text>
<text x="159.85" y="218.85" text-anchor="middle" font-size="10.5" fill="#242424" stroke="#242424" stroke-width="0.15" textLength="20.58" lengthAdjust="spacingAndGlyphs">57%</text>
<text x="240.35" y="218.85" text-anchor="middle" font-size="10.5" fill="#242424" stroke="#242424" stroke-width="0.15" textLength="20.58" lengthAdjust="spacingAndGlyphs">60%</text>
<text x="306.25" y="218.85" text-anchor="middle" font-size="10.5" fill="#242424" stroke="#242424" stroke-width="0.15" textLength="18.10" lengthAdjust="spacingAndGlyphs">517</text>
<text x="365.00" y="218.85" text-anchor="middle" font-size="10.5" fill="#242424" stroke="#242424" stroke-width="0.15" textLength="12.07" lengthAdjust="spacingAndGlyphs">54</text>
<text x="424.15" y="218.85" text-anchor="middle" font-size="10.5" fill="#242424" stroke="#242424" stroke-width="0.15" textLength="21.07" lengthAdjust="spacingAndGlyphs">1,46</text>
<text x="475.95" y="218.85" text-anchor="middle" font-size="10.5" fill="#242424" stroke="#242424" stroke-width="0.15" textLength="26.61" lengthAdjust="spacingAndGlyphs">100%</text>
<text x="529.40" y="218.85" text-anchor="middle" font-size="10.5" fill="#242424" stroke="#242424" stroke-width="0.15" textLength="41.52" lengthAdjust="spacingAndGlyphs">fotovolt.</text>
<text x="578.80" y="218.85" text-anchor="middle" font-size="10.5" fill="#242424" stroke="#242424" stroke-width="0.15" textLength="6.03" lengthAdjust="spacingAndGlyphs">0</text>
<text x="637.25" y="218.85" text-anchor="middle" font-size="10.5" fill="#242424" stroke="#242424" stroke-width="0.15" textLength="33.14" lengthAdjust="spacingAndGlyphs">0,1018</text>
<text x="726.70" y="218.85" text-anchor="end" font-size="10.5" fill="#242424" stroke="#242424" stroke-width="0.15" textLength="39.17" lengthAdjust="spacingAndGlyphs">0,00129</text>
<text x="785.70" y="218.85" text-anchor="end" font-size="10.5" fill="#242424" stroke="#242424" stroke-width="0.15" textLength="33.14" lengthAdjust="spacingAndGlyphs">36,986</text>
<text x="876.70" y="218.85" text-anchor="end" font-size="10.5" fill="#242424" stroke="#242424" stroke-width="0.15" textLength="33.14" lengthAdjust="spacingAndGlyphs">1,3348</text>
<text x="87.40" y="234.53" text-anchor="middle" font-size="10.5" fill="#242424" stroke="#242424" stroke-width="0.15" textLength="57.45" lengthAdjust="spacingAndGlyphs">04/03/2022</text>
<text x="159.85" y="234.53" text-anchor="middle" font-size="10.5" fill="#242424" stroke="#242424" stroke-width="0.15" textLength="20.58" lengthAdjust="spacingAndGlyphs">17%</text>
<text x="240.35" y="234.53" text-anchor="middle" font-size="10.5" fill="#242424" stroke="#242424" stroke-width="0.15" textLength="20.58" lengthAdjust="spacingAndGlyphs">17%</text>
<text x="306.25" y="234.53" text-anchor="middle" font-size="10.5" fill="#242424" stroke="#242424" stroke-width="0.15" textLength="18.10" lengthAdjust="spacingAndGlyphs">573</text>
<text x="365.00" y="234.53" text-anchor="middle" font-size="10.5" fill="#242424" stroke="#242424" stroke-width="0.15" textLength="12.07" lengthAdjust="spacingAndGlyphs">56</text>
<text x="424.15" y="234.53" text-anchor="middle" font-size="10.5" fill="#242424" stroke="#242424" stroke-width="0.15" textLength="21.07" lengthAdjust="spacingAndGlyphs">2,24</text>
<text x="475.95" y="234.53" text-anchor="middle" font-size="10.5" fill="#242424" stroke="#242424" stroke-width="0.15" textLength="26.61" lengthAdjust="spacingAndGlyphs">100%</text>
<text x="529.40" y="234.53" text-anchor="middle" font-size="10.5" fill="#242424" stroke="#242424" stroke-width="0.15" textLength="41.52" lengthAdjust="spacingAndGlyphs">fotovolt.</text>
<text x="578.80" y="234.53" text-anchor="middle" font-size="10.5" fill="#242424" stroke="#242424" stroke-width="0.15" textLength="6.03" lengthAdjust="spacingAndGlyphs">0</text>
<text x="637.25" y="234.53" text-anchor="middle" font-size="10.5" fill="#242424" stroke="#242424" stroke-width="0.15" textLength="33.14" lengthAdjust="spacingAndGlyphs">0,1561</text>
<text x="726.70" y="234.53" text-anchor="end" font-size="10.5" fill="#242424" stroke="#242424" stroke-width="0.15" textLength="39.17" lengthAdjust="spacingAndGlyphs">0,00124</text>
<text x="785.70" y="234.53" text-anchor="end" font-size="10.5" fill="#242424" stroke="#242424" stroke-width="0.15" textLength="33.14" lengthAdjust="spacingAndGlyphs">25,000</text>
<text x="876.70" y="234.53" text-anchor="end" font-size="10.5" fill="#242424" stroke="#242424" stroke-width="0.15" textLength="33.14" lengthAdjust="spacingAndGlyphs">1,4909</text>
<text x="87.40" y="250.21" text-anchor="middle" font-size="10.5" fill="#242424" stroke="#242424" stroke-width="0.15" textLength="57.45" lengthAdjust="spacingAndGlyphs">06/06/2022</text>
<text x="159.85" y="250.21" text-anchor="middle" font-size="10.5" fill="#242424" stroke="#242424" stroke-width="0.15" textLength="20.58" lengthAdjust="spacingAndGlyphs">50%</text>
<text x="240.35" y="250.21" text-anchor="middle" font-size="10.5" fill="#242424" stroke="#242424" stroke-width="0.15" textLength="20.58" lengthAdjust="spacingAndGlyphs">43%</text>
<text x="306.25" y="250.21" text-anchor="middle" font-size="10.5" fill="#242424" stroke="#242424" stroke-width="0.15" textLength="18.10" lengthAdjust="spacingAndGlyphs">602</text>
<text x="365.00" y="250.21" text-anchor="middle" font-size="10.5" fill="#242424" stroke="#242424" stroke-width="0.15" textLength="12.07" lengthAdjust="spacingAndGlyphs">29</text>
<text x="424.15" y="250.21" text-anchor="middle" font-size="10.5" fill="#242424" stroke="#242424" stroke-width="0.15" textLength="6.03" lengthAdjust="spacingAndGlyphs">2</text>
<text x="475.95" y="250.21" text-anchor="middle" font-size="10.5" fill="#242424" stroke="#242424" stroke-width="0.15" textLength="26.61" lengthAdjust="spacingAndGlyphs">100%</text>
<text x="529.40" y="250.21" text-anchor="middle" font-size="10.5" fill="#242424" stroke="#242424" stroke-width="0.15" textLength="41.52" lengthAdjust="spacingAndGlyphs">fotovolt.</text>
<text x="578.80" y="250.21" text-anchor="middle" font-size="10.5" fill="#242424" stroke="#242424" stroke-width="0.15" textLength="6.03" lengthAdjust="spacingAndGlyphs">0</text>
<text x="637.25" y="250.21" text-anchor="middle" font-size="10.5" fill="#242424" stroke="#242424" stroke-width="0.15" textLength="33.14" lengthAdjust="spacingAndGlyphs">0,1394</text>
<text x="726.70" y="250.21" text-anchor="end" font-size="10.5" fill="#242424" stroke="#242424" stroke-width="0.15" textLength="39.17" lengthAdjust="spacingAndGlyphs">0,00240</text>
<text x="785.70" y="250.21" text-anchor="end" font-size="10.5" fill="#242424" stroke="#242424" stroke-width="0.15" textLength="33.14" lengthAdjust="spacingAndGlyphs">14,500</text>
<text x="876.70" y="250.21" text-anchor="end" font-size="10.5" fill="#242424" stroke="#242424" stroke-width="0.15" textLength="33.14" lengthAdjust="spacingAndGlyphs">1,6303</text>
<text x="87.40" y="265.89" text-anchor="middle" font-size="10.5" fill="#242424" stroke="#242424" stroke-width="0.15" textLength="57.45" lengthAdjust="spacingAndGlyphs">08/03/2022</text>
<text x="159.85" y="265.89" text-anchor="middle" font-size="10.5" fill="#242424" stroke="#242424" stroke-width="0.15" textLength="20.58" lengthAdjust="spacingAndGlyphs">40%</text>
<text x="240.35" y="265.89" text-anchor="middle" font-size="10.5" fill="#242424" stroke="#242424" stroke-width="0.15" textLength="20.58" lengthAdjust="spacingAndGlyphs">42%</text>
<text x="306.25" y="265.89" text-anchor="middle" font-size="10.5" fill="#242424" stroke="#242424" stroke-width="0.15" textLength="18.10" lengthAdjust="spacingAndGlyphs">642</text>
<text x="365.00" y="265.89" text-anchor="middle" font-size="10.5" fill="#242424" stroke="#242424" stroke-width="0.15" textLength="12.07" lengthAdjust="spacingAndGlyphs">40</text>
<text x="424.15" y="265.89" text-anchor="middle" font-size="10.5" fill="#242424" stroke="#242424" stroke-width="0.15" textLength="6.03" lengthAdjust="spacingAndGlyphs">2</text>
<text x="475.95" y="265.89" text-anchor="middle" font-size="10.5" fill="#242424" stroke="#242424" stroke-width="0.15" textLength="26.61" lengthAdjust="spacingAndGlyphs">100%</text>
<text x="529.40" y="265.89" text-anchor="middle" font-size="10.5" fill="#242424" stroke="#242424" stroke-width="0.15" textLength="41.52" lengthAdjust="spacingAndGlyphs">fotovolt.</text>
<text x="578.80" y="265.89" text-anchor="middle" font-size="10.5" fill="#242424" stroke="#242424" stroke-width="0.15" textLength="6.03" lengthAdjust="spacingAndGlyphs">0</text>
<text x="637.25" y="265.89" text-anchor="middle" font-size="10.5" fill="#242424" stroke="#242424" stroke-width="0.15" textLength="33.14" lengthAdjust="spacingAndGlyphs">0,1394</text>
<text x="726.70" y="265.89" text-anchor="end" font-size="10.5" fill="#242424" stroke="#242424" stroke-width="0.15" textLength="39.17" lengthAdjust="spacingAndGlyphs">0,00174</text>
<text x="785.70" y="265.89" text-anchor="end" font-size="10.5" fill="#242424" stroke="#242424" stroke-width="0.15" textLength="33.14" lengthAdjust="spacingAndGlyphs">20,000</text>
<text x="876.70" y="265.89" text-anchor="end" font-size="10.5" fill="#242424" stroke="#242424" stroke-width="0.15" textLength="33.14" lengthAdjust="spacingAndGlyphs">1,7697</text>
<text x="87.40" y="281.57" text-anchor="middle" font-size="10.5" fill="#242424" stroke="#242424" stroke-width="0.15" textLength="57.45" lengthAdjust="spacingAndGlyphs">12/03/2022</text>
<text x="159.85" y="281.57" text-anchor="middle" font-size="10.5" fill="#242424" stroke="#242424" stroke-width="0.15" textLength="20.58" lengthAdjust="spacingAndGlyphs">20%</text>
<text x="240.35" y="281.57" text-anchor="middle" font-size="10.5" fill="#242424" stroke="#242424" stroke-width="0.15" textLength="20.58" lengthAdjust="spacingAndGlyphs">23%</text>
<text x="306.25" y="281.57" text-anchor="middle" font-size="10.5" fill="#242424" stroke="#242424" stroke-width="0.15" textLength="18.10" lengthAdjust="spacingAndGlyphs">695</text>
<text x="365.00" y="281.57" text-anchor="middle" font-size="10.5" fill="#242424" stroke="#242424" stroke-width="0.15" textLength="12.07" lengthAdjust="spacingAndGlyphs">53</text>
<text x="424.15" y="281.57" text-anchor="middle" font-size="10.5" fill="#242424" stroke="#242424" stroke-width="0.15" textLength="21.07" lengthAdjust="spacingAndGlyphs">2,63</text>
<text x="475.95" y="281.57" text-anchor="middle" font-size="10.5" fill="#242424" stroke="#242424" stroke-width="0.15" textLength="26.61" lengthAdjust="spacingAndGlyphs">100%</text>
<text x="529.40" y="281.57" text-anchor="middle" font-size="10.5" fill="#242424" stroke="#242424" stroke-width="0.15" textLength="41.52" lengthAdjust="spacingAndGlyphs">fotovolt.</text>
<text x="578.80" y="281.57" text-anchor="middle" font-size="10.5" fill="#242424" stroke="#242424" stroke-width="0.15" textLength="6.03" lengthAdjust="spacingAndGlyphs">0</text>
<text x="637.25" y="281.57" text-anchor="middle" font-size="10.5" fill="#242424" stroke="#242424" stroke-width="0.15" textLength="33.14" lengthAdjust="spacingAndGlyphs">0,1833</text>
<text x="726.70" y="281.57" text-anchor="end" font-size="10.5" fill="#242424" stroke="#242424" stroke-width="0.15" textLength="39.17" lengthAdjust="spacingAndGlyphs">0,00132</text>
<text x="785.70" y="281.57" text-anchor="end" font-size="10.5" fill="#242424" stroke="#242424" stroke-width="0.15" textLength="33.14" lengthAdjust="spacingAndGlyphs">20,152</text>
<text x="876.70" y="281.57" text-anchor="end" font-size="10.5" fill="#242424" stroke="#242424" stroke-width="0.15" textLength="33.14" lengthAdjust="spacingAndGlyphs">1,9530</text>
<text x="87.40" y="297.25" text-anchor="middle" font-size="10.5" fill="#242424" stroke="#242424" stroke-width="0.15" textLength="57.45" lengthAdjust="spacingAndGlyphs">16/03/2022</text>
<text x="159.85" y="297.25" text-anchor="middle" font-size="10.5" fill="#242424" stroke="#242424" stroke-width="0.15" textLength="20.58" lengthAdjust="spacingAndGlyphs">35%</text>
<text x="240.35" y="297.25" text-anchor="middle" font-size="10.5" fill="#242424" stroke="#242424" stroke-width="0.15" textLength="20.58" lengthAdjust="spacingAndGlyphs">37%</text>
<text x="306.25" y="297.25" text-anchor="middle" font-size="10.5" fill="#242424" stroke="#242424" stroke-width="0.15" textLength="18.10" lengthAdjust="spacingAndGlyphs">741</text>
<text x="365.00" y="297.25" text-anchor="middle" font-size="10.5" fill="#242424" stroke="#242424" stroke-width="0.15" textLength="12.07" lengthAdjust="spacingAndGlyphs">46</text>
<text x="424.15" y="297.25" text-anchor="middle" font-size="10.5" fill="#242424" stroke="#242424" stroke-width="0.15" textLength="21.07" lengthAdjust="spacingAndGlyphs">2,19</text>
<text x="475.95" y="297.25" text-anchor="middle" font-size="10.5" fill="#242424" stroke="#242424" stroke-width="0.15" textLength="26.61" lengthAdjust="spacingAndGlyphs">100%</text>
<text x="529.40" y="297.25" text-anchor="middle" font-size="10.5" fill="#242424" stroke="#242424" stroke-width="0.15" textLength="41.52" lengthAdjust="spacingAndGlyphs">fotovolt.</text>
<text x="578.80" y="297.25" text-anchor="middle" font-size="10.5" fill="#242424" stroke="#242424" stroke-width="0.15" textLength="6.03" lengthAdjust="spacingAndGlyphs">0</text>
<text x="637.25" y="297.25" text-anchor="middle" font-size="10.5" fill="#242424" stroke="#242424" stroke-width="0.15" textLength="33.14" lengthAdjust="spacingAndGlyphs">0,1526</text>
<text x="726.70" y="297.25" text-anchor="end" font-size="10.5" fill="#242424" stroke="#242424" stroke-width="0.15" textLength="39.17" lengthAdjust="spacingAndGlyphs">0,00152</text>
<text x="785.70" y="297.25" text-anchor="end" font-size="10.5" fill="#242424" stroke="#242424" stroke-width="0.15" textLength="33.14" lengthAdjust="spacingAndGlyphs">21,005</text>
<text x="876.70" y="297.25" text-anchor="end" font-size="10.5" fill="#242424" stroke="#242424" stroke-width="0.15" textLength="33.14" lengthAdjust="spacingAndGlyphs">2,1056</text>
<text x="87.40" y="312.93" text-anchor="middle" font-size="10.5" fill="#242424" stroke="#242424" stroke-width="0.15" textLength="57.45" lengthAdjust="spacingAndGlyphs">17/03/2022</text>
<text x="159.85" y="312.93" text-anchor="middle" font-size="10.5" fill="#242424" stroke="#242424" stroke-width="0.15" textLength="20.58" lengthAdjust="spacingAndGlyphs">70%</text>
<text x="240.35" y="312.93" text-anchor="middle" font-size="10.5" fill="#242424" stroke="#242424" stroke-width="0.15" textLength="20.58" lengthAdjust="spacingAndGlyphs">70%</text>
<text x="306.25" y="312.93" text-anchor="middle" font-size="10.5" fill="#242424" stroke="#242424" stroke-width="0.15" textLength="18.10" lengthAdjust="spacingAndGlyphs">762</text>
<text x="365.00" y="312.93" text-anchor="middle" font-size="10.5" fill="#242424" stroke="#242424" stroke-width="0.15" textLength="12.07" lengthAdjust="spacingAndGlyphs">21</text>
<text x="424.15" y="312.93" text-anchor="middle" font-size="10.5" fill="#242424" stroke="#242424" stroke-width="0.15" textLength="15.04" lengthAdjust="spacingAndGlyphs">0,8</text>
<text x="475.95" y="312.93" text-anchor="middle" font-size="10.5" fill="#242424" stroke="#242424" stroke-width="0.15" textLength="26.61" lengthAdjust="spacingAndGlyphs">100%</text>
<text x="529.40" y="312.93" text-anchor="middle" font-size="10.5" fill="#242424" stroke="#242424" stroke-width="0.15" textLength="41.52" lengthAdjust="spacingAndGlyphs">fotovolt.</text>
<text x="578.80" y="312.93" text-anchor="middle" font-size="10.5" fill="#242424" stroke="#242424" stroke-width="0.15" textLength="6.03" lengthAdjust="spacingAndGlyphs">0</text>
<text x="637.25" y="312.93" text-anchor="middle" font-size="10.5" fill="#242424" stroke="#242424" stroke-width="0.15" textLength="33.14" lengthAdjust="spacingAndGlyphs">0,0558</text>
<text x="726.70" y="312.93" text-anchor="end" font-size="10.5" fill="#242424" stroke="#242424" stroke-width="0.15" textLength="39.17" lengthAdjust="spacingAndGlyphs">0,00332</text>
<text x="785.70" y="312.93" text-anchor="end" font-size="10.5" fill="#242424" stroke="#242424" stroke-width="0.15" textLength="33.14" lengthAdjust="spacingAndGlyphs">26,250</text>
<text x="876.70" y="312.93" text-anchor="end" font-size="10.5" fill="#242424" stroke="#242424" stroke-width="0.15" textLength="33.14" lengthAdjust="spacingAndGlyphs">2,1614</text>
<text x="87.40" y="328.61" text-anchor="middle" font-size="10.5" fill="#242424" stroke="#242424" stroke-width="0.15" textLength="57.45" lengthAdjust="spacingAndGlyphs">18/03/2022</text>
<text x="159.85" y="328.61" text-anchor="middle" font-size="10.5" fill="#242424" stroke="#242424" stroke-width="0.15" textLength="14.54" lengthAdjust="spacingAndGlyphs">8%</text>
<text x="240.35" y="328.61" text-anchor="middle" font-size="10.5" fill="#242424" stroke="#242424" stroke-width="0.15" textLength="14.54" lengthAdjust="spacingAndGlyphs">9%</text>
<text x="306.25" y="328.61" text-anchor="middle" font-size="10.5" fill="#242424" stroke="#242424" stroke-width="0.15" textLength="18.10" lengthAdjust="spacingAndGlyphs">825</text>
<text x="365.00" y="328.61" text-anchor="middle" font-size="10.5" fill="#242424" stroke="#242424" stroke-width="0.15" textLength="12.07" lengthAdjust="spacingAndGlyphs">63</text>
<text x="424.15" y="328.61" text-anchor="middle" font-size="10.5" fill="#242424" stroke="#242424" stroke-width="0.15" textLength="21.07" lengthAdjust="spacingAndGlyphs">2,88</text>
<text x="475.95" y="328.61" text-anchor="middle" font-size="10.5" fill="#242424" stroke="#242424" stroke-width="0.15" textLength="26.61" lengthAdjust="spacingAndGlyphs">100%</text>
<text x="529.40" y="328.61" text-anchor="middle" font-size="10.5" fill="#242424" stroke="#242424" stroke-width="0.15" textLength="41.52" lengthAdjust="spacingAndGlyphs">fotovolt.</text>
<text x="578.80" y="328.61" text-anchor="middle" font-size="10.5" fill="#242424" stroke="#242424" stroke-width="0.15" textLength="6.03" lengthAdjust="spacingAndGlyphs">0</text>
<text x="637.25" y="328.61" text-anchor="middle" font-size="10.5" fill="#242424" stroke="#242424" stroke-width="0.15" textLength="33.14" lengthAdjust="spacingAndGlyphs">0,2007</text>
<text x="726.70" y="328.61" text-anchor="end" font-size="10.5" fill="#242424" stroke="#242424" stroke-width="0.15" textLength="39.17" lengthAdjust="spacingAndGlyphs">0,00111</text>
<text x="785.70" y="328.61" text-anchor="end" font-size="10.5" fill="#242424" stroke="#242424" stroke-width="0.15" textLength="33.14" lengthAdjust="spacingAndGlyphs">21,875</text>
<text x="876.70" y="328.61" text-anchor="end" font-size="10.5" fill="#242424" stroke="#242424" stroke-width="0.15" textLength="33.14" lengthAdjust="spacingAndGlyphs">2,3621</text>
<text x="87.40" y="344.29" text-anchor="middle" font-size="10.5" fill="#242424" stroke="#242424" stroke-width="0.15" textLength="57.45" lengthAdjust="spacingAndGlyphs">25/03/2022</text>
<text x="159.85" y="344.29" text-anchor="middle" font-size="10.5" fill="#242424" stroke="#242424" stroke-width="0.15" textLength="20.58" lengthAdjust="spacingAndGlyphs">14%</text>
<text x="240.35" y="344.29" text-anchor="middle" font-size="10.5" fill="#242424" stroke="#242424" stroke-width="0.15" textLength="20.58" lengthAdjust="spacingAndGlyphs">17%</text>
<text x="306.25" y="344.29" text-anchor="middle" font-size="10.5" fill="#242424" stroke="#242424" stroke-width="0.15" textLength="18.10" lengthAdjust="spacingAndGlyphs">870</text>
<text x="365.00" y="344.29" text-anchor="middle" font-size="10.5" fill="#242424" stroke="#242424" stroke-width="0.15" textLength="12.07" lengthAdjust="spacingAndGlyphs">45</text>
<text x="424.15" y="344.29" text-anchor="middle" font-size="10.5" fill="#242424" stroke="#242424" stroke-width="0.15" textLength="21.07" lengthAdjust="spacingAndGlyphs">2,18</text>
<text x="475.95" y="344.29" text-anchor="middle" font-size="10.5" fill="#242424" stroke="#242424" stroke-width="0.15" textLength="26.61" lengthAdjust="spacingAndGlyphs">100%</text>
<text x="529.40" y="344.29" text-anchor="middle" font-size="10.5" fill="#242424" stroke="#242424" stroke-width="0.15" textLength="41.52" lengthAdjust="spacingAndGlyphs">fotovolt.</text>
<text x="578.80" y="344.29" text-anchor="middle" font-size="10.5" fill="#242424" stroke="#242424" stroke-width="0.15" textLength="6.03" lengthAdjust="spacingAndGlyphs">0</text>
<text x="637.25" y="344.29" text-anchor="middle" font-size="10.5" fill="#242424" stroke="#242424" stroke-width="0.15" textLength="33.14" lengthAdjust="spacingAndGlyphs">0,1519</text>
<text x="726.70" y="344.29" text-anchor="end" font-size="10.5" fill="#242424" stroke="#242424" stroke-width="0.15" textLength="39.17" lengthAdjust="spacingAndGlyphs">0,00155</text>
<text x="785.70" y="344.29" text-anchor="end" font-size="10.5" fill="#242424" stroke="#242424" stroke-width="0.15" textLength="33.14" lengthAdjust="spacingAndGlyphs">20,642</text>
<text x="876.70" y="344.29" text-anchor="end" font-size="10.5" fill="#242424" stroke="#242424" stroke-width="0.15" textLength="33.14" lengthAdjust="spacingAndGlyphs">2,5141</text>
<text x="87.40" y="359.97" text-anchor="middle" font-size="10.5" fill="#242424" stroke="#242424" stroke-width="0.15" textLength="57.45" lengthAdjust="spacingAndGlyphs">31/03/2022</text>
<text x="159.85" y="359.97" text-anchor="middle" font-size="8.0" fill="#242424" stroke="#242424" stroke-width="0.15" textLength="64.67" lengthAdjust="spacingAndGlyphs">tagliando 1000km</text>
<text x="240.35" y="359.97" text-anchor="middle" font-size="8.0" fill="#242424" stroke="#242424" stroke-width="0.15" textLength="64.67" lengthAdjust="spacingAndGlyphs">tagliando 1000km</text>
<text x="306.25" y="359.97" text-anchor="middle" font-size="10.5" fill="#242424" stroke="#242424" stroke-width="0.15" textLength="18.10" lengthAdjust="spacingAndGlyphs">924</text>
<text x="365.00" y="359.97" text-anchor="middle" font-size="10.5" fill="#242424" stroke="#242424" stroke-width="0.15" textLength="12.07" lengthAdjust="spacingAndGlyphs">54</text>
<text x="424.15" y="359.97" text-anchor="middle" font-size="10.5" fill="#242424" stroke="#242424" stroke-width="0.15" textLength="6.03" lengthAdjust="spacingAndGlyphs">1</text>
<text x="475.95" y="359.97" text-anchor="middle" font-size="10.5" fill="#242424" stroke="#242424" stroke-width="0.15" textLength="26.61" lengthAdjust="spacingAndGlyphs">100%</text>
<text x="529.40" y="359.97" text-anchor="middle" font-size="10.5" fill="#242424" stroke="#242424" stroke-width="0.15" textLength="35.96" lengthAdjust="spacingAndGlyphs">officina</text>
<text x="578.80" y="359.97" text-anchor="middle" font-size="10.5" fill="#242424" stroke="#242424" stroke-width="0.15" textLength="6.03" lengthAdjust="spacingAndGlyphs">0</text>
<text x="637.25" y="359.97" text-anchor="middle" font-size="10.5" fill="#242424" stroke="#242424" stroke-width="0.15" textLength="33.14" lengthAdjust="spacingAndGlyphs">0,0697</text>
<text x="726.70" y="359.97" text-anchor="end" font-size="10.5" fill="#242424" stroke="#242424" stroke-width="0.15" textLength="39.17" lengthAdjust="spacingAndGlyphs">0,00129</text>
<text x="785.70" y="359.97" text-anchor="end" font-size="10.5" fill="#242424" stroke="#242424" stroke-width="0.15" textLength="27.11" lengthAdjust="spacingAndGlyphs">0,000</text>
<text x="876.70" y="359.97" text-anchor="end" font-size="10.5" fill="#242424" stroke="#242424" stroke-width="0.15" textLength="33.14" lengthAdjust="spacingAndGlyphs">2,5838</text>
<text x="87.40" y="375.65" text-anchor="middle" font-size="10.5" fill="#242424" stroke="#242424" stroke-width="0.15" textLength="57.45" lengthAdjust="spacingAndGlyphs">06/04/2022</text>
<text x="159.85" y="375.65" text-anchor="middle" font-size="10.5" fill="#242424" stroke="#242424" stroke-width="0.15" textLength="20.58" lengthAdjust="spacingAndGlyphs">11%</text>
<text x="240.35" y="375.65" text-anchor="middle" font-size="10.5" fill="#242424" stroke="#242424" stroke-width="0.15" textLength="20.58" lengthAdjust="spacingAndGlyphs">17%</text>
<text x="306.25" y="375.65" text-anchor="middle" font-size="10.5" fill="#242424" stroke="#242424" stroke-width="0.15" textLength="18.10" lengthAdjust="spacingAndGlyphs">981</text>
<text x="365.00" y="375.65" text-anchor="middle" font-size="10.5" fill="#242424" stroke="#242424" stroke-width="0.15" textLength="12.07" lengthAdjust="spacingAndGlyphs">57</text>
<text x="424.15" y="375.65" text-anchor="middle" font-size="10.5" fill="#242424" stroke="#242424" stroke-width="0.15" textLength="15.04" lengthAdjust="spacingAndGlyphs">2,7</text>
<text x="475.95" y="375.65" text-anchor="middle" font-size="10.5" fill="#242424" stroke="#242424" stroke-width="0.15" textLength="26.61" lengthAdjust="spacingAndGlyphs">100%</text>
<text x="529.40" y="375.65" text-anchor="middle" font-size="10.5" fill="#242424" stroke="#242424" stroke-width="0.15" textLength="41.52" lengthAdjust="spacingAndGlyphs">fotovolt.</text>
<text x="578.80" y="375.65" text-anchor="middle" font-size="10.5" fill="#242424" stroke="#242424" stroke-width="0.15" textLength="6.03" lengthAdjust="spacingAndGlyphs">0</text>
<text x="637.25" y="375.65" text-anchor="middle" font-size="10.5" fill="#242424" stroke="#242424" stroke-width="0.15" textLength="33.14" lengthAdjust="spacingAndGlyphs">0,1882</text>
<text x="726.70" y="375.65" text-anchor="end" font-size="10.5" fill="#242424" stroke="#242424" stroke-width="0.15" textLength="39.17" lengthAdjust="spacingAndGlyphs">0,00122</text>
<text x="785.70" y="375.65" text-anchor="end" font-size="10.5" fill="#242424" stroke="#242424" stroke-width="0.15" textLength="33.14" lengthAdjust="spacingAndGlyphs">21,111</text>
<text x="876.70" y="375.65" text-anchor="end" font-size="10.5" fill="#242424" stroke="#242424" stroke-width="0.15" textLength="33.14" lengthAdjust="spacingAndGlyphs">2,7720</text>
<text x="87.40" y="391.33" text-anchor="middle" font-size="10.5" fill="#242424" stroke="#242424" stroke-width="0.15" textLength="57.45" lengthAdjust="spacingAndGlyphs">08/04/2022</text>
<text x="159.85" y="391.33" text-anchor="middle" font-size="10.5" fill="#242424" stroke="#242424" stroke-width="0.15" textLength="20.58" lengthAdjust="spacingAndGlyphs">48%</text>
<text x="240.35" y="391.33" text-anchor="middle" font-size="10.5" fill="#242424" stroke="#242424" stroke-width="0.15" textLength="20.58" lengthAdjust="spacingAndGlyphs">49%</text>
<text x="306.25" y="391.33" text-anchor="middle" font-size="10.5" fill="#242424" stroke="#242424" stroke-width="0.15" textLength="24.13" lengthAdjust="spacingAndGlyphs">1016</text>
<text x="365.00" y="391.33" text-anchor="middle" font-size="10.5" fill="#242424" stroke="#242424" stroke-width="0.15" textLength="12.07" lengthAdjust="spacingAndGlyphs">35</text>
<text x="424.15" y="391.33" text-anchor="middle" font-size="10.5" fill="#242424" stroke="#242424" stroke-width="0.15" textLength="21.07" lengthAdjust="spacingAndGlyphs">1,78</text>
<text x="475.95" y="391.33" text-anchor="middle" font-size="10.5" fill="#242424" stroke="#242424" stroke-width="0.15" textLength="26.61" lengthAdjust="spacingAndGlyphs">100%</text>
<text x="529.40" y="391.33" text-anchor="middle" font-size="10.5" fill="#242424" stroke="#242424" stroke-width="0.15" textLength="41.52" lengthAdjust="spacingAndGlyphs">fotovolt.</text>
<text x="578.80" y="391.33" text-anchor="middle" font-size="10.5" fill="#242424" stroke="#242424" stroke-width="0.15" textLength="6.03" lengthAdjust="spacingAndGlyphs">0</text>
<text x="637.25" y="391.33" text-anchor="middle" font-size="10.5" fill="#242424" stroke="#242424" stroke-width="0.15" textLength="33.14" lengthAdjust="spacingAndGlyphs">0,1241</text>
<text x="726.70" y="391.33" text-anchor="end" font-size="10.5" fill="#242424" stroke="#242424" stroke-width="0.15" textLength="39.17" lengthAdjust="spacingAndGlyphs">0,00199</text>
<text x="785.70" y="391.33" text-anchor="end" font-size="10.5" fill="#242424" stroke="#242424" stroke-width="0.15" textLength="33.14" lengthAdjust="spacingAndGlyphs">19,663</text>
<text x="876.70" y="391.33" text-anchor="end" font-size="10.5" fill="#242424" stroke="#242424" stroke-width="0.15" textLength="33.14" lengthAdjust="spacingAndGlyphs">2,8960</text>
<text x="87.40" y="407.01" text-anchor="middle" font-size="10.5" fill="#242424" stroke="#242424" stroke-width="0.15" textLength="57.45" lengthAdjust="spacingAndGlyphs">11/04/2022</text>
<text x="159.85" y="407.01" text-anchor="middle" font-size="10.5" fill="#242424" stroke="#242424" stroke-width="0.15" textLength="20.58" lengthAdjust="spacingAndGlyphs">11%</text>
<text x="240.35" y="407.01" text-anchor="middle" font-size="10.5" fill="#242424" stroke="#242424" stroke-width="0.15" textLength="20.58" lengthAdjust="spacingAndGlyphs">19%</text>
<text x="306.25" y="407.01" text-anchor="middle" font-size="10.5" fill="#242424" stroke="#242424" stroke-width="0.15" textLength="24.13" lengthAdjust="spacingAndGlyphs">1088</text>
<text x="365.00" y="407.01" text-anchor="middle" font-size="10.5" fill="#242424" stroke="#242424" stroke-width="0.15" textLength="12.07" lengthAdjust="spacingAndGlyphs">72</text>
<text x="424.15" y="407.01" text-anchor="middle" font-size="10.5" fill="#242424" stroke="#242424" stroke-width="0.15" textLength="21.07" lengthAdjust="spacingAndGlyphs">2,82</text>
<text x="475.95" y="407.01" text-anchor="middle" font-size="10.5" fill="#242424" stroke="#242424" stroke-width="0.15" textLength="26.61" lengthAdjust="spacingAndGlyphs">100%</text>
<text x="529.40" y="407.01" text-anchor="middle" font-size="10.5" fill="#242424" stroke="#242424" stroke-width="0.15" textLength="41.52" lengthAdjust="spacingAndGlyphs">fotovolt.</text>
<text x="578.80" y="407.01" text-anchor="middle" font-size="10.5" fill="#242424" stroke="#242424" stroke-width="0.15" textLength="6.03" lengthAdjust="spacingAndGlyphs">0</text>
<text x="637.25" y="407.01" text-anchor="middle" font-size="10.5" fill="#242424" stroke="#242424" stroke-width="0.15" textLength="33.14" lengthAdjust="spacingAndGlyphs">0,1966</text>
<text x="726.70" y="407.01" text-anchor="end" font-size="10.5" fill="#242424" stroke="#242424" stroke-width="0.15" textLength="39.17" lengthAdjust="spacingAndGlyphs">0,00097</text>
<text x="785.70" y="407.01" text-anchor="end" font-size="10.5" fill="#242424" stroke="#242424" stroke-width="0.15" textLength="33.14" lengthAdjust="spacingAndGlyphs">25,532</text>
<text x="876.70" y="407.01" text-anchor="end" font-size="10.5" fill="#242424" stroke="#242424" stroke-width="0.15" textLength="33.14" lengthAdjust="spacingAndGlyphs">3,0926</text>
<text x="87.40" y="422.69" text-anchor="middle" font-size="10.5" fill="#242424" stroke="#242424" stroke-width="0.15" textLength="57.45" lengthAdjust="spacingAndGlyphs">14/04/2022</text>
<text x="159.85" y="422.69" text-anchor="middle" font-size="10.5" fill="#242424" stroke="#242424" stroke-width="0.15" textLength="20.58" lengthAdjust="spacingAndGlyphs">20%</text>
<text x="240.35" y="422.69" text-anchor="middle" font-size="10.5" fill="#242424" stroke="#242424" stroke-width="0.15" textLength="20.58" lengthAdjust="spacingAndGlyphs">18%</text>
<text x="306.25" y="422.69" text-anchor="middle" font-size="10.5" fill="#242424" stroke="#242424" stroke-width="0.15" textLength="24.13" lengthAdjust="spacingAndGlyphs">1140</text>
<text x="365.00" y="422.69" text-anchor="middle" font-size="10.5" fill="#242424" stroke="#242424" stroke-width="0.15" textLength="12.07" lengthAdjust="spacingAndGlyphs">52</text>
<text x="424.15" y="422.69" text-anchor="middle" font-size="10.5" fill="#242424" stroke="#242424" stroke-width="0.15" textLength="21.07" lengthAdjust="spacingAndGlyphs">1,47</text>
<text x="475.95" y="422.69" text-anchor="middle" font-size="10.5" fill="#242424" stroke="#242424" stroke-width="0.15" textLength="26.61" lengthAdjust="spacingAndGlyphs">100%</text>
<text x="529.40" y="422.69" text-anchor="middle" font-size="10.5" fill="#242424" stroke="#242424" stroke-width="0.15" textLength="41.52" lengthAdjust="spacingAndGlyphs">fotovolt.</text>
<text x="578.80" y="422.69" text-anchor="middle" font-size="10.5" fill="#242424" stroke="#242424" stroke-width="0.15" textLength="6.03" lengthAdjust="spacingAndGlyphs">0</text>
<text x="637.25" y="422.69" text-anchor="middle" font-size="10.5" fill="#242424" stroke="#242424" stroke-width="0.15" textLength="33.14" lengthAdjust="spacingAndGlyphs">0,1025</text>
<text x="726.70" y="422.69" text-anchor="end" font-size="10.5" fill="#242424" stroke="#242424" stroke-width="0.15" textLength="39.17" lengthAdjust="spacingAndGlyphs">0,00134</text>
<text x="785.70" y="422.69" text-anchor="end" font-size="10.5" fill="#242424" stroke="#242424" stroke-width="0.15" textLength="33.14" lengthAdjust="spacingAndGlyphs">35,374</text>
<text x="876.70" y="422.69" text-anchor="end" font-size="10.5" fill="#242424" stroke="#242424" stroke-width="0.15" textLength="33.14" lengthAdjust="spacingAndGlyphs">3,1950</text>
<text x="87.40" y="438.37" text-anchor="middle" font-size="10.5" fill="#242424" stroke="#242424" stroke-width="0.15" textLength="57.45" lengthAdjust="spacingAndGlyphs">18/04/2022</text>
<text x="159.85" y="438.37" text-anchor="middle" font-size="10.5" fill="#242424" stroke="#242424" stroke-width="0.15" textLength="5.51" lengthAdjust="spacingAndGlyphs">?</text>
<text x="240.35" y="438.37" text-anchor="middle" font-size="10.5" fill="#242424" stroke="#242424" stroke-width="0.15" textLength="5.51" lengthAdjust="spacingAndGlyphs">?</text>
<text x="306.25" y="438.37" text-anchor="middle" font-size="10.5" fill="#242424" stroke="#242424" stroke-width="0.15" textLength="24.13" lengthAdjust="spacingAndGlyphs">1180</text>
<text x="365.00" y="438.37" text-anchor="middle" font-size="10.5" fill="#242424" stroke="#242424" stroke-width="0.15" textLength="12.07" lengthAdjust="spacingAndGlyphs">40</text>
<text x="424.15" y="438.37" text-anchor="middle" font-size="10.5" fill="#242424" stroke="#242424" stroke-width="0.15" textLength="21.07" lengthAdjust="spacingAndGlyphs">1,98</text>
<text x="475.95" y="438.37" text-anchor="middle" font-size="10.5" fill="#242424" stroke="#242424" stroke-width="0.15" textLength="26.61" lengthAdjust="spacingAndGlyphs">100%</text>
<text x="529.40" y="438.37" text-anchor="middle" font-size="10.5" fill="#242424" stroke="#242424" stroke-width="0.15" textLength="41.52" lengthAdjust="spacingAndGlyphs">fotovolt.</text>
<text x="578.80" y="438.37" text-anchor="middle" font-size="10.5" fill="#242424" stroke="#242424" stroke-width="0.15" textLength="6.03" lengthAdjust="spacingAndGlyphs">0</text>
<text x="637.25" y="438.37" text-anchor="middle" font-size="10.5" fill="#242424" stroke="#242424" stroke-width="0.15" textLength="33.14" lengthAdjust="spacingAndGlyphs">0,1380</text>
<text x="726.70" y="438.37" text-anchor="end" font-size="10.5" fill="#242424" stroke="#242424" stroke-width="0.15" textLength="39.17" lengthAdjust="spacingAndGlyphs">0,00174</text>
<text x="785.70" y="438.37" text-anchor="end" font-size="10.5" fill="#242424" stroke="#242424" stroke-width="0.15" textLength="33.14" lengthAdjust="spacingAndGlyphs">20,202</text>
<text x="876.70" y="438.37" text-anchor="end" font-size="10.5" fill="#242424" stroke="#242424" stroke-width="0.15" textLength="33.14" lengthAdjust="spacingAndGlyphs">3,3331</text>
<text x="87.40" y="454.05" text-anchor="middle" font-size="10.5" fill="#242424" stroke="#242424" stroke-width="0.15" textLength="57.45" lengthAdjust="spacingAndGlyphs">22/04/2022</text>
<text x="159.85" y="454.05" text-anchor="middle" font-size="10.5" fill="#242424" stroke="#242424" stroke-width="0.15" textLength="20.58" lengthAdjust="spacingAndGlyphs">17%</text>
<text x="240.35" y="454.05" text-anchor="middle" font-size="10.5" fill="#242424" stroke="#242424" stroke-width="0.15" textLength="20.58" lengthAdjust="spacingAndGlyphs">20%</text>
<text x="306.25" y="454.05" text-anchor="middle" font-size="10.5" fill="#242424" stroke="#242424" stroke-width="0.15" textLength="24.13" lengthAdjust="spacingAndGlyphs">1203</text>
<text x="365.00" y="454.05" text-anchor="middle" font-size="10.5" fill="#242424" stroke="#242424" stroke-width="0.15" textLength="12.07" lengthAdjust="spacingAndGlyphs">23</text>
<text x="424.15" y="454.05" text-anchor="middle" font-size="10.5" fill="#242424" stroke="#242424" stroke-width="0.15" textLength="21.07" lengthAdjust="spacingAndGlyphs">2,18</text>
<text x="475.95" y="454.05" text-anchor="middle" font-size="10.5" fill="#242424" stroke="#242424" stroke-width="0.15" textLength="26.61" lengthAdjust="spacingAndGlyphs">100%</text>
<text x="529.40" y="454.05" text-anchor="middle" font-size="10.5" fill="#242424" stroke="#242424" stroke-width="0.15" textLength="21.09" lengthAdjust="spacingAndGlyphs">casa</text>
<text x="578.80" y="454.05" text-anchor="middle" font-size="10.5" fill="#242424" stroke="#242424" stroke-width="0.15" textLength="33.14" lengthAdjust="spacingAndGlyphs">0,0697</text>
<text x="637.25" y="454.05" text-anchor="middle" font-size="10.5" fill="#242424" stroke="#242424" stroke-width="0.15" textLength="33.14" lengthAdjust="spacingAndGlyphs">0,1519</text>
<text x="726.70" y="454.05" text-anchor="end" font-size="10.5" fill="#242424" stroke="#242424" stroke-width="0.15" textLength="39.17" lengthAdjust="spacingAndGlyphs">0,00303</text>
<text x="785.70" y="454.05" text-anchor="end" font-size="10.5" fill="#242424" stroke="#242424" stroke-width="0.15" textLength="33.14" lengthAdjust="spacingAndGlyphs">10,550</text>
<text x="876.70" y="454.05" text-anchor="end" font-size="10.5" fill="#242424" stroke="#242424" stroke-width="0.15" textLength="33.14" lengthAdjust="spacingAndGlyphs">3,4850</text>
<text x="365.00" y="469.73" text-anchor="middle" font-size="10.5" fill="#242424" stroke="#242424" stroke-width="0.15" textLength="27.77" lengthAdjust="spacingAndGlyphs">-1203</text>
<text x="578.80" y="469.73" text-anchor="middle" font-size="10.5" fill="#242424" stroke="#242424" stroke-width="0.15" textLength="33.14" lengthAdjust="spacingAndGlyphs">0,0697</text>
<text x="637.25" y="469.73" text-anchor="middle" font-size="10.5" fill="#242424" stroke="#242424" stroke-width="0.15" textLength="33.14" lengthAdjust="spacingAndGlyphs">0,0000</text>
<text x="726.70" y="469.73" text-anchor="end" font-size="10.5" fill="#242424" stroke="#242424" stroke-width="0.15" textLength="42.82" lengthAdjust="spacingAndGlyphs">-0,00006</text>
<text x="758.40" y="469.73" text-anchor="middle" font-size="10.5" fill="#242424" stroke="#242424" stroke-width="0.15" textLength="37.50" lengthAdjust="spacingAndGlyphs">#DIV/0!</text>
<text x="876.70" y="469.73" text-anchor="end" font-size="10.5" fill="#242424" stroke="#242424" stroke-width="0.15" textLength="33.14" lengthAdjust="spacingAndGlyphs">3,4850</text>
<text x="365.00" y="485.41" text-anchor="middle" font-size="10.5" fill="#242424" stroke="#242424" stroke-width="0.15" textLength="6.03" lengthAdjust="spacingAndGlyphs">0</text>
<text x="578.80" y="485.41" text-anchor="middle" font-size="10.5" fill="#242424" stroke="#242424" stroke-width="0.15" textLength="33.14" lengthAdjust="spacingAndGlyphs">0,0697</text>
<text x="637.25" y="485.41" text-anchor="middle" font-size="10.5" fill="#242424" stroke="#242424" stroke-width="0.15" textLength="33.14" lengthAdjust="spacingAndGlyphs">0,0000</text>
<text x="701.35" y="485.41" text-anchor="middle" font-size="10.5" fill="#242424" stroke="#242424" stroke-width="0.15" textLength="37.50" lengthAdjust="spacingAndGlyphs">#DIV/0!</text>
<text x="758.40" y="485.41" text-anchor="middle" font-size="10.5" fill="#242424" stroke="#242424" stroke-width="0.15" textLength="37.50" lengthAdjust="spacingAndGlyphs">#DIV/0!</text>
<text x="876.70" y="485.41" text-anchor="end" font-size="10.5" fill="#242424" stroke="#242424" stroke-width="0.15" textLength="33.14" lengthAdjust="spacingAndGlyphs">3,4850</text>
<text x="365.00" y="501.09" text-anchor="middle" font-size="10.5" fill="#242424" stroke="#242424" stroke-width="0.15" textLength="6.03" lengthAdjust="spacingAndGlyphs">0</text>
<text x="578.80" y="501.09" text-anchor="middle" font-size="10.5" fill="#242424" stroke="#242424" stroke-width="0.15" textLength="33.14" lengthAdjust="spacingAndGlyphs">0,0697</text>
<text x="637.25" y="501.09" text-anchor="middle" font-size="10.5" fill="#242424" stroke="#242424" stroke-width="0.15" textLength="33.14" lengthAdjust="spacingAndGlyphs">0,0000</text>
<text x="701.35" y="501.09" text-anchor="middle" font-size="10.5" fill="#242424" stroke="#242424" stroke-width="0.15" textLength="37.50" lengthAdjust="spacingAndGlyphs">#DIV/0!</text>
<text x="758.40" y="501.09" text-anchor="middle" font-size="10.5" fill="#242424" stroke="#242424" stroke-width="0.15" textLength="37.50" lengthAdjust="spacingAndGlyphs">#DIV/0!</text>
<text x="876.70" y="501.09" text-anchor="end" font-size="10.5" fill="#242424" stroke="#242424" stroke-width="0.15" textLength="33.14" lengthAdjust="spacingAndGlyphs">3,4850</text>
<text x="578.80" y="516.77" text-anchor="middle" font-size="10.5" fill="#242424" stroke="#242424" stroke-width="0.15" textLength="33.14" lengthAdjust="spacingAndGlyphs">0,0697</text>
<text x="637.25" y="516.77" text-anchor="middle" font-size="10.5" fill="#242424" stroke="#242424" stroke-width="0.15" textLength="33.14" lengthAdjust="spacingAndGlyphs">0,0000</text>
<text x="701.35" y="516.77" text-anchor="middle" font-size="10.5" fill="#242424" stroke="#242424" stroke-width="0.15" textLength="37.50" lengthAdjust="spacingAndGlyphs">#DIV/0!</text>
<text x="758.40" y="516.77" text-anchor="middle" font-size="10.5" fill="#242424" stroke="#242424" stroke-width="0.15" textLength="37.50" lengthAdjust="spacingAndGlyphs">#DIV/0!</text>
<text x="876.70" y="516.77" text-anchor="end" font-size="10.5" fill="#242424" stroke="#242424" stroke-width="0.15" textLength="33.14" lengthAdjust="spacingAndGlyphs">3,4850</text>
<text x="758.40" y="532.45" text-anchor="middle" font-size="10.5" fill="#242424" stroke="#242424" stroke-width="0.15" textLength="37.50" lengthAdjust="spacingAndGlyphs">#DIV/0!</text>
<text x="876.70" y="532.45" text-anchor="end" font-size="10.5" fill="#242424" stroke="#242424" stroke-width="0.15" textLength="33.14" lengthAdjust="spacingAndGlyphs">3,4850</text>
<text x="38.70" y="77.73" text-anchor="middle" font-size="10.5" fill="#242424" stroke="#242424" stroke-width="0.15" textLength="6.03" lengthAdjust="spacingAndGlyphs">1</text>
<text x="38.70" y="93.41" text-anchor="middle" font-size="10.5" fill="#242424" stroke="#242424" stroke-width="0.15" textLength="6.03" lengthAdjust="spacingAndGlyphs">2</text>
<text x="38.70" y="109.09" text-anchor="middle" font-size="10.5" fill="#242424" stroke="#242424" stroke-width="0.15" textLength="6.03" lengthAdjust="spacingAndGlyphs">3</text>
<text x="38.70" y="124.77" text-anchor="middle" font-size="10.5" fill="#242424" stroke="#242424" stroke-width="0.15" textLength="6.03" lengthAdjust="spacingAndGlyphs">4</text>
<text x="38.70" y="140.45" text-anchor="middle" font-size="10.5" fill="#242424" stroke="#242424" stroke-width="0.15" textLength="6.03" lengthAdjust="spacingAndGlyphs">5</text>
<text x="38.70" y="156.13" text-anchor="middle" font-size="10.5" fill="#242424" stroke="#242424" stroke-width="0.15" textLength="6.03" lengthAdjust="spacingAndGlyphs">6</text>
<text x="38.70" y="171.81" text-anchor="middle" font-size="10.5" fill="#242424" stroke="#242424" stroke-width="0.15" textLength="6.03" lengthAdjust="spacingAndGlyphs">7</text>
<text x="38.70" y="187.49" text-anchor="middle" font-size="10.5" fill="#242424" stroke="#242424" stroke-width="0.15" textLength="6.03" lengthAdjust="spacingAndGlyphs">8</text>
<text x="38.70" y="203.17" text-anchor="middle" font-size="10.5" fill="#242424" stroke="#242424" stroke-width="0.15" textLength="6.03" lengthAdjust="spacingAndGlyphs">9</text>
<text x="38.70" y="218.85" text-anchor="middle" font-size="10.5" fill="#242424" stroke="#242424" stroke-width="0.15" textLength="12.07" lengthAdjust="spacingAndGlyphs">10</text>
<text x="38.70" y="234.53" text-anchor="middle" font-size="10.5" fill="#242424" stroke="#242424" stroke-width="0.15" textLength="12.07" lengthAdjust="spacingAndGlyphs">11</text>
<text x="38.70" y="250.21" text-anchor="middle" font-size="10.5" fill="#242424" stroke="#242424" stroke-width="0.15" textLength="12.07" lengthAdjust="spacingAndGlyphs">12</text>
<text x="38.70" y="265.89" text-anchor="middle" font-size="10.5" fill="#242424" stroke="#242424" stroke-width="0.15" textLength="12.07" lengthAdjust="spacingAndGlyphs">13</text>
<text x="38.70" y="281.57" text-anchor="middle" font-size="10.5" fill="#242424" stroke="#242424" stroke-width="0.15" textLength="12.07" lengthAdjust="spacingAndGlyphs">14</text>
<text x="38.70" y="297.25" text-anchor="middle" font-size="10.5" fill="#242424" stroke="#242424" stroke-width="0.15" textLength="12.07" lengthAdjust="spacingAndGlyphs">15</text>
<text x="38.70" y="312.93" text-anchor="middle" font-size="10.5" fill="#242424" stroke="#242424" stroke-width="0.15" textLength="12.07" lengthAdjust="spacingAndGlyphs">16</text>
<text x="38.70" y="328.61" text-anchor="middle" font-size="10.5" fill="#242424" stroke="#242424" stroke-width="0.15" textLength="12.07" lengthAdjust="spacingAndGlyphs">17</text>
<text x="38.70" y="344.29" text-anchor="middle" font-size="10.5" fill="#242424" stroke="#242424" stroke-width="0.15" textLength="12.07" lengthAdjust="spacingAndGlyphs">18</text>
<text x="38.70" y="359.97" text-anchor="middle" font-size="10.5" fill="#242424" stroke="#242424" stroke-width="0.15" textLength="12.07" lengthAdjust="spacingAndGlyphs">19</text>
<text x="38.70" y="375.65" text-anchor="middle" font-size="10.5" fill="#242424" stroke="#242424" stroke-width="0.15" textLength="12.07" lengthAdjust="spacingAndGlyphs">20</text>
<text x="38.70" y="391.33" text-anchor="middle" font-size="10.5" fill="#242424" stroke="#242424" stroke-width="0.15" textLength="12.07" lengthAdjust="spacingAndGlyphs">21</text>
<text x="38.70" y="407.01" text-anchor="middle" font-size="10.5" fill="#242424" stroke="#242424" stroke-width="0.15" textLength="12.07" lengthAdjust="spacingAndGlyphs">22</text>
<text x="38.70" y="422.69" text-anchor="middle" font-size="10.5" fill="#242424" stroke="#242424" stroke-width="0.15" textLength="12.07" lengthAdjust="spacingAndGlyphs">23</text>
<text x="38.70" y="438.37" text-anchor="middle" font-size="10.5" fill="#242424" stroke="#242424" stroke-width="0.15" textLength="12.07" lengthAdjust="spacingAndGlyphs">24</text>
<text x="38.70" y="454.05" text-anchor="middle" font-size="10.5" fill="#242424" stroke="#242424" stroke-width="0.15" textLength="12.07" lengthAdjust="spacingAndGlyphs">25</text>
<text x="38.70" y="469.73" text-anchor="middle" font-size="10.5" fill="#242424" stroke="#242424" stroke-width="0.15" textLength="12.07" lengthAdjust="spacingAndGlyphs">26</text>
<text x="38.70" y="485.41" text-anchor="middle" font-size="10.5" fill="#242424" stroke="#242424" stroke-width="0.15" textLength="12.07" lengthAdjust="spacingAndGlyphs">27</text>
<text x="38.70" y="501.09" text-anchor="middle" font-size="10.5" fill="#242424" stroke="#242424" stroke-width="0.15" textLength="12.07" lengthAdjust="spacingAndGlyphs">28</text>
<text x="38.70" y="516.77" text-anchor="middle" font-size="10.5" fill="#242424" stroke="#242424" stroke-width="0.15" textLength="12.07" lengthAdjust="spacingAndGlyphs">29</text>
<text x="38.70" y="532.45" text-anchor="middle" font-size="10.5" fill="#242424" stroke="#242424" stroke-width="0.15" textLength="12.07" lengthAdjust="spacingAndGlyphs">30</text>
<text x="38.70" y="548.13" text-anchor="middle" font-size="10.5" fill="#242424" stroke="#242424" stroke-width="0.15" textLength="12.07" lengthAdjust="spacingAndGlyphs">31</text>
<text x="880.90" y="77.73" text-anchor="start" font-size="10.5" fill="#242424" stroke="#242424" stroke-width="0.15" textLength="55.54" lengthAdjust="spacingAndGlyphs">costo F2-F3</text>
<text x="880.90" y="93.41" text-anchor="start" font-size="10.5" fill="#242424" stroke="#242424" stroke-width="0.15" textLength="65.13" lengthAdjust="spacingAndGlyphs">accise al kWh</text>
<text x="915.90" y="109.09" text-anchor="middle" font-size="10.5" fill="#242424" stroke="#242424" stroke-width="0.15" textLength="14.24" lengthAdjust="spacingAndGlyphs">tot</text>
<text x="1005.70" y="77.73" text-anchor="end" font-size="10.5" fill="#242424" stroke="#242424" stroke-width="0.15" textLength="27.11" lengthAdjust="spacingAndGlyphs">0,047</text>
<text x="1005.70" y="93.41" text-anchor="end" font-size="10.5" fill="#242424" stroke="#242424" stroke-width="0.15" textLength="33.14" lengthAdjust="spacingAndGlyphs">0,0227</text>
<text x="1005.70" y="109.09" text-anchor="end" font-size="10.5" fill="#242424" stroke="#242424" stroke-width="0.15" font-weight="bold" textLength="33.54" lengthAdjust="spacingAndGlyphs">0,0697</text>
<text x="1009.90" y="77.73" text-anchor="start" font-size="10.5" fill="#242424" stroke="#242424" stroke-width="0.15" textLength="32.88" lengthAdjust="spacingAndGlyphs">€/kWh</text>
<text x="1009.90" y="93.41" text-anchor="start" font-size="10.5" fill="#242424" stroke="#242424" stroke-width="0.15" textLength="32.88" lengthAdjust="spacingAndGlyphs">€/kWh</text>
<text x="1009.90" y="109.09" text-anchor="start" font-size="10.5" fill="#242424" stroke="#242424" stroke-width="0.15" textLength="32.88" lengthAdjust="spacingAndGlyphs">€/kWh</text>
<text x="1091.30" y="93.16" text-anchor="middle" font-size="10.5" fill="#242424" stroke="#242424" stroke-width="0.15" textLength="33.61" lengthAdjust="spacingAndGlyphs">nov-21</text>
</g>
<path d="M674.2 473.3 h4.5 L674.2 477.8 Z" fill="#0c8c1c"/>
<path d="M674.2 489.0 h4.5 L674.2 493.5 Z" fill="#0c8c1c"/>
<path d="M674.2 504.6 h4.5 L674.2 509.1 Z" fill="#0c8c1c"/>
<path d="M729.3 457.6 h4.5 L729.3 462.1 Z" fill="#0c8c1c"/>
<path d="M729.3 473.3 h4.5 L729.3 477.8 Z" fill="#0c8c1c"/>
<path d="M729.3 489.0 h4.5 L729.3 493.5 Z" fill="#0c8c1c"/>
<path d="M729.3 504.6 h4.5 L729.3 509.1 Z" fill="#0c8c1c"/>
<path d="M729.3 520.3 h4.5 L729.3 524.8 Z" fill="#0c8c1c"/>
<rect x="0" y="0" width="1600" height="17.4" fill="#262626"/>
<rect x="0" y="0" width="22" height="546" fill="#262626"/>
<path d="M9 15.8 L20.2 15.8 L20.2 4.4 Z" fill="#6b6b6b"/>
<rect x="1063.2" y="2" width="55.4" height="15" fill="#656565"/>
<rect x="1063.2" y="16" width="55.4" height="1.8" fill="#4a9466"/>
<rect x="0" y="394.3" width="22" height="15.7" fill="#6a6a6a"/>
<rect x="22" y="2" width="1" height="15" fill="#3d3d3d"/><rect x="54" y="2" width="1" height="15" fill="#3d3d3d"/><rect x="119" y="2" width="1" height="15" fill="#3d3d3d"/><rect x="199" y="2" width="1" height="15" fill="#3d3d3d"/><rect x="280" y="2" width="1" height="15" fill="#3d3d3d"/><rect x="331" y="2" width="1" height="15" fill="#3d3d3d"/><rect x="397" y="2" width="1" height="15" fill="#3d3d3d"/><rect x="449" y="2" width="1" height="15" fill="#3d3d3d"/><rect x="501" y="2" width="1" height="15" fill="#3d3d3d"/><rect x="556" y="2" width="1" height="15" fill="#3d3d3d"/><rect x="600" y="2" width="1" height="15" fill="#3d3d3d"/><rect x="673" y="2" width="1" height="15" fill="#3d3d3d"/><rect x="728" y="2" width="1" height="15" fill="#3d3d3d"/><rect x="787" y="2" width="1" height="15" fill="#3d3d3d"/><rect x="878" y="2" width="1" height="15" fill="#3d3d3d"/><rect x="952" y="2" width="1" height="15" fill="#3d3d3d"/><rect x="1007" y="2" width="1" height="15" fill="#3d3d3d"/><rect x="1063" y="2" width="1" height="15" fill="#3d3d3d"/><rect x="1118" y="2" width="1" height="15" fill="#3d3d3d"/><rect x="1173" y="2" width="1" height="15" fill="#3d3d3d"/><rect x="1229" y="2" width="1" height="15" fill="#3d3d3d"/><rect x="1284" y="2" width="1" height="15" fill="#3d3d3d"/><rect x="1340" y="2" width="1" height="15" fill="#3d3d3d"/><rect x="1395" y="2" width="1" height="15" fill="#3d3d3d"/><rect x="1450" y="2" width="1" height="15" fill="#3d3d3d"/><rect x="1506" y="2" width="1" height="15" fill="#3d3d3d"/><rect x="1561" y="2" width="1" height="15" fill="#3d3d3d"/><rect x="0" y="33" width="22" height="1" fill="#3d3d3d"/><rect x="0" y="65" width="22" height="1" fill="#3d3d3d"/><rect x="0" y="80" width="22" height="1" fill="#3d3d3d"/><rect x="0" y="96" width="22" height="1" fill="#3d3d3d"/><rect x="0" y="112" width="22" height="1" fill="#3d3d3d"/><rect x="0" y="127" width="22" height="1" fill="#3d3d3d"/><rect x="0" y="143" width="22" height="1" fill="#3d3d3d"/><rect x="0" y="159" width="22" height="1" fill="#3d3d3d"/><rect x="0" y="174" width="22" height="1" fill="#3d3d3d"/><rect x="0" y="190" width="22" height="1" fill="#3d3d3d"/><rect x="0" y="206" width="22" height="1" fill="#3d3d3d"/><rect x="0" y="221" width="22" height="1" fill="#3d3d3d"/><rect x="0" y="237" width="22" height="1" fill="#3d3d3d"/><rect x="0" y="253" width="22" height="1" fill="#3d3d3d"/><rect x="0" y="268" width="22" height="1" fill="#3d3d3d"/><rect x="0" y="284" width="22" height="1" fill="#3d3d3d"/><rect x="0" y="300" width="22" height="1" fill="#3d3d3d"/><rect x="0" y="315" width="22" height="1" fill="#3d3d3d"/><rect x="0" y="331" width="22" height="1" fill="#3d3d3d"/><rect x="0" y="347" width="22" height="1" fill="#3d3d3d"/><rect x="0" y="362" width="22" height="1" fill="#3d3d3d"/><rect x="0" y="378" width="22" height="1" fill="#3d3d3d"/><rect x="0" y="394" width="22" height="1" fill="#3d3d3d"/><rect x="0" y="409" width="22" height="1" fill="#3d3d3d"/><rect x="0" y="425" width="22" height="1" fill="#3d3d3d"/><rect x="0" y="441" width="22" height="1" fill="#3d3d3d"/><rect x="0" y="457" width="22" height="1" fill="#3d3d3d"/><rect x="0" y="472" width="22" height="1" fill="#3d3d3d"/><rect x="0" y="488" width="22" height="1" fill="#3d3d3d"/><rect x="0" y="504" width="22" height="1" fill="#3d3d3d"/><rect x="0" y="519" width="22" height="1" fill="#3d3d3d"/><rect x="0" y="535" width="22" height="1" fill="#3d3d3d"/><rect x="0" y="551" width="22" height="1" fill="#3d3d3d"/><rect x="21" y="17" width="1" height="529" fill="#444444"/>
<rect x="20.9" y="394.3" width="1.3" height="15.7" fill="#2e8050"/>
<g font-family="Liberation Sans, sans-serif" fill="#c8c8c8" font-size="10.2" text-anchor="middle">
<text x="38.3" y="13.1">A</text>
<text x="87.0" y="13.1">B</text>
<text x="159.4" y="13.1">C</text>
<text x="239.9" y="13.1">D</text>
<text x="305.9" y="13.1">E</text>
<text x="364.6" y="13.1">F</text>
<text x="423.8" y="13.1">G</text>
<text x="475.6" y="13.1">H</text>
<text x="529.0" y="13.1">I</text>
<text x="578.4" y="13.1">J</text>
<text x="636.8" y="13.1">K</text>
<text x="701.0" y="13.1">L</text>
<text x="758.0" y="13.1">M</text>
<text x="833.0" y="13.1">N</text>
<text x="915.5" y="13.1">O</text>
<text x="980.0" y="13.1">P</text>
<text x="1035.3" y="13.1">Q</text>
<text x="1090.9" y="13.1">R</text>
<text x="1146.2" y="13.1">S</text>
<text x="1201.7" y="13.1">T</text>
<text x="1257.1" y="13.1">U</text>
<text x="1312.6" y="13.1">V</text>
<text x="1368.1" y="13.1">W</text>
<text x="1423.2" y="13.1">X</text>
<text x="1478.5" y="13.1">Y</text>
<text x="1533.8" y="13.1">Z</text>
<text x="1589.2" y="13.1">AA</text>
<text x="11.2" y="30.20" font-size="10.8">1</text>
<text x="11.2" y="61.00" font-size="10.8">2</text>
<text x="11.2" y="77.38" font-size="10.8">3</text>
<text x="11.2" y="93.06" font-size="10.8">4</text>
<text x="11.2" y="108.74" font-size="10.8">5</text>
<text x="11.2" y="124.42" font-size="10.8">6</text>
<text x="11.2" y="140.10" font-size="10.8">7</text>
<text x="11.2" y="155.78" font-size="10.8">8</text>
<text x="11.2" y="171.46" font-size="10.8">9</text>
<text x="11.2" y="187.14" font-size="10.8">10</text>
<text x="11.2" y="202.82" font-size="10.8">11</text>
<text x="11.2" y="218.50" font-size="10.8">12</text>
<text x="11.2" y="234.18" font-size="10.8">13</text>
<text x="11.2" y="249.86" font-size="10.8">14</text>
<text x="11.2" y="265.54" font-size="10.8">15</text>
<text x="11.2" y="281.22" font-size="10.8">16</text>
<text x="11.2" y="296.90" font-size="10.8">17</text>
<text x="11.2" y="312.58" font-size="10.8">18</text>
<text x="11.2" y="328.26" font-size="10.8">19</text>
<text x="11.2" y="343.94" font-size="10.8">20</text>
<text x="11.2" y="359.62" font-size="10.8">21</text>
<text x="11.2" y="375.30" font-size="10.8">22</text>
<text x="11.2" y="390.98" font-size="10.8">23</text>
<text x="11.2" y="406.66" font-size="10.8">24</text>
<text x="11.2" y="422.34" font-size="10.8">25</text>
<text x="11.2" y="438.02" font-size="10.8">26</text>
<text x="11.2" y="453.70" font-size="10.8">27</text>
<text x="11.2" y="469.38" font-size="10.8">28</text>
<text x="11.2" y="485.06" font-size="10.8">29</text>
<text x="11.2" y="500.74" font-size="10.8">30</text>
<text x="11.2" y="516.42" font-size="10.8">31</text>
<text x="11.2" y="532.10" font-size="10.8">32</text>
<text x="11.2" y="547.78" font-size="10.8">33</text>
<text x="11.2" y="563.46" font-size="10.8">34</text>
</g>
<rect x="1063" y="394" width="56" height="1.2" fill="#3a8058"/>
<rect x="1063" y="394" width="1.2" height="16" fill="#3a8058"/>
<rect x="1118" y="394" width="1.8" height="16.6" fill="#86b898"/>
<rect x="1063" y="409" width="56.8" height="1.8" fill="#9cc4a8"/>
<rect x="1116.6" y="407.6" width="3.6" height="3.6" fill="#1f6e40"/>
<g font-family="Liberation Sans, sans-serif">
<rect x="1164.5" y="62" width="417.5" height="226" fill="#ffffff" stroke="#d9d9d9" stroke-width="1"/>
<text x="1373" y="85.1" text-anchor="middle" font-size="14.4" fill="#595959" textLength="248" lengthAdjust="spacingAndGlyphs">andamento km percorsi e kw per ricarica</text>
<rect x="1190.7" y="237.60" width="379.3" height="1" fill="#d9d9d9"/>
<text x="1181.5" y="241.10" text-anchor="end" font-size="8.2" fill="#767676">0</text>
<rect x="1190.7" y="220.54" width="379.3" height="1" fill="#d9d9d9"/>
<text x="1181.5" y="224.04" text-anchor="end" font-size="8.2" fill="#767676">10</text>
<rect x="1190.7" y="203.48" width="379.3" height="1" fill="#d9d9d9"/>
<text x="1181.5" y="206.98" text-anchor="end" font-size="8.2" fill="#767676">20</text>
<rect x="1190.7" y="186.42" width="379.3" height="1" fill="#d9d9d9"/>
<text x="1181.5" y="189.92" text-anchor="end" font-size="8.2" fill="#767676">30</text>
<rect x="1190.7" y="169.36" width="379.3" height="1" fill="#d9d9d9"/>
<text x="1181.5" y="172.86" text-anchor="end" font-size="8.2" fill="#767676">40</text>
<rect x="1190.7" y="152.30" width="379.3" height="1" fill="#d9d9d9"/>
<text x="1181.5" y="155.80" text-anchor="end" font-size="8.2" fill="#767676">50</text>
<rect x="1190.7" y="135.24" width="379.3" height="1" fill="#d9d9d9"/>
<text x="1181.5" y="138.74" text-anchor="end" font-size="8.2" fill="#767676">60</text>
<rect x="1190.7" y="118.18" width="379.3" height="1" fill="#d9d9d9"/>
<text x="1181.5" y="121.68" text-anchor="end" font-size="8.2" fill="#767676">70</text>
<rect x="1190.7" y="101.12" width="379.3" height="1" fill="#d9d9d9"/>
<text x="1181.5" y="104.62" text-anchor="end" font-size="8.2" fill="#767676">80</text>
<rect x="1195.37" y="130.62" width="4.2" height="107.48" fill="#5b9bd5"/>
<rect x="1208.92" y="161.33" width="4.2" height="76.77" fill="#5b9bd5"/>
<rect x="1222.47" y="140.86" width="4.2" height="97.24" fill="#5b9bd5"/>
<rect x="1236.01" y="142.56" width="4.2" height="95.54" fill="#5b9bd5"/>
<rect x="1249.56" y="140.86" width="4.2" height="97.24" fill="#5b9bd5"/>
<rect x="1263.11" y="154.51" width="4.2" height="83.59" fill="#5b9bd5"/>
<rect x="1276.65" y="159.62" width="4.2" height="78.48" fill="#5b9bd5"/>
<rect x="1290.20" y="139.15" width="4.2" height="98.95" fill="#5b9bd5"/>
<rect x="1303.74" y="183.51" width="4.2" height="54.59" fill="#5b9bd5"/>
<rect x="1317.29" y="145.98" width="4.2" height="92.12" fill="#5b9bd5"/>
<rect x="1330.84" y="142.56" width="4.2" height="95.54" fill="#5b9bd5"/>
<rect x="1344.38" y="188.63" width="4.2" height="49.47" fill="#5b9bd5"/>
<rect x="1357.93" y="169.86" width="4.2" height="68.24" fill="#5b9bd5"/>
<rect x="1371.48" y="147.68" width="4.2" height="90.42" fill="#5b9bd5"/>
<rect x="1385.02" y="159.62" width="4.2" height="78.48" fill="#5b9bd5"/>
<rect x="1398.57" y="202.27" width="4.2" height="35.83" fill="#5b9bd5"/>
<rect x="1412.12" y="130.62" width="4.2" height="107.48" fill="#5b9bd5"/>
<rect x="1425.66" y="161.33" width="4.2" height="76.77" fill="#5b9bd5"/>
<rect x="1439.21" y="145.98" width="4.2" height="92.12" fill="#5b9bd5"/>
<rect x="1452.76" y="140.86" width="4.2" height="97.24" fill="#5b9bd5"/>
<rect x="1466.30" y="178.39" width="4.2" height="59.71" fill="#5b9bd5"/>
<rect x="1479.85" y="115.27" width="4.2" height="122.83" fill="#5b9bd5"/>
<rect x="1493.39" y="149.39" width="4.2" height="88.71" fill="#5b9bd5"/>
<rect x="1506.94" y="169.86" width="4.2" height="68.24" fill="#5b9bd5"/>
<rect x="1520.49" y="198.86" width="4.2" height="39.24" fill="#5b9bd5"/>
<path d="M1197.47 233.00 C1199.73 233.22 1206.50 234.28 1211.02 234.31 C1215.54 234.35 1220.05 233.23 1224.57 233.20 C1229.08 233.18 1233.60 234.18 1238.11 234.18 C1242.63 234.17 1247.14 233.22 1251.66 233.15 C1256.17 233.09 1260.69 233.65 1265.21 233.78 C1269.72 233.92 1274.24 233.82 1278.75 233.97 C1283.27 234.12 1287.78 234.50 1292.30 234.69 C1296.81 234.88 1301.33 234.94 1305.84 235.10 C1310.36 235.25 1314.88 235.75 1319.39 235.61 C1323.91 235.47 1328.42 234.43 1332.94 234.28 C1337.45 234.13 1341.97 234.62 1346.48 234.69 C1351.00 234.76 1355.51 234.87 1360.03 234.69 C1364.55 234.51 1369.06 233.67 1373.58 233.61 C1378.09 233.56 1382.61 233.84 1387.12 234.36 C1391.64 234.88 1396.15 236.93 1400.67 236.74 C1405.19 236.54 1409.70 233.58 1414.22 233.19 C1418.73 232.79 1423.25 233.85 1427.76 234.38 C1432.28 234.92 1436.79 236.54 1441.31 236.39 C1445.82 236.25 1450.34 233.72 1454.86 233.49 C1459.37 233.27 1463.89 235.10 1468.40 235.06 C1472.92 235.03 1477.43 233.20 1481.95 233.29 C1486.46 233.38 1490.98 235.35 1495.49 235.59 C1500.01 235.83 1504.53 234.92 1509.04 234.72 C1513.56 234.52 1520.33 234.44 1522.59 234.38" fill="none" stroke="#ed7d31" stroke-width="2.2" stroke-linecap="round"/>
<text x="1197.47" y="253.6" text-anchor="middle" font-size="8.2" fill="#767676">1</text>
<text x="1211.02" y="253.6" text-anchor="middle" font-size="8.2" fill="#767676">2</text>
<text x="1224.57" y="253.6" text-anchor="middle" font-size="8.2" fill="#767676">3</text>
<text x="1238.11" y="253.6" text-anchor="middle" font-size="8.2" fill="#767676">4</text>
<text x="1251.66" y="253.6" text-anchor="middle" font-size="8.2" fill="#767676">5</text>
<text x="1265.21" y="253.6" text-anchor="middle" font-size="8.2" fill="#767676">6</text>
<text x="1278.75" y="253.6" text-anchor="middle" font-size="8.2" fill="#767676">7</text>
<text x="1292.30" y="253.6" text-anchor="middle" font-size="8.2" fill="#767676">8</text>
<text x="1305.84" y="253.6" text-anchor="middle" font-size="8.2" fill="#767676">9</text>
<text x="1319.39" y="253.6" text-anchor="middle" font-size="8.2" fill="#767676">10</text>
<text x="1332.94" y="253.6" text-anchor="middle" font-size="8.2" fill="#767676">11</text>
<text x="1346.48" y="253.6" text-anchor="middle" font-size="8.2" fill="#767676">12</text>
<text x="1360.03" y="253.6" text-anchor="middle" font-size="8.2" fill="#767676">13</text>
<text x="1373.58" y="253.6" text-anchor="middle" font-size="8.2" fill="#767676">14</text>
<text x="1387.12" y="253.6" text-anchor="middle" font-size="8.2" fill="#767676">15</text>
<text x="1400.67" y="253.6" text-anchor="middle" font-size="8.2" fill="#767676">16</text>
<text x="1414.22" y="253.6" text-anchor="middle" font-size="8.2" fill="#767676">17</text>
<text x="1427.76" y="253.6" text-anchor="middle" font-size="8.2" fill="#767676">18</text>
<text x="1441.31" y="253.6" text-anchor="middle" font-size="8.2" fill="#767676">19</text>
<text x="1454.86" y="253.6" text-anchor="middle" font-size="8.2" fill="#767676">20</text>
<text x="1468.40" y="253.6" text-anchor="middle" font-size="8.2" fill="#767676">21</text>
<text x="1481.95" y="253.6" text-anchor="middle" font-size="8.2" fill="#767676">22</text>
<text x="1495.49" y="253.6" text-anchor="middle" font-size="8.2" fill="#767676">23</text>
<text x="1509.04" y="253.6" text-anchor="middle" font-size="8.2" fill="#767676">24</text>
<text x="1522.59" y="253.6" text-anchor="middle" font-size="8.2" fill="#767676">25</text>
<text x="1536.13" y="253.6" text-anchor="middle" font-size="8.2" fill="#767676">26</text>
<text x="1549.68" y="253.6" text-anchor="middle" font-size="8.2" fill="#767676">27</text>
<text x="1563.23" y="253.6" text-anchor="middle" font-size="8.2" fill="#767676">28</text>
<rect x="1313.2" y="269.1" width="20.8" height="5.8" fill="#5b9bd5"/>
<text x="1336.7" y="274.6" font-size="8.2" fill="#767676" textLength="45.3" lengthAdjust="spacingAndGlyphs">km percorsi</text>
<rect x="1395" y="271.1" width="22" height="2.8" rx="1.4" fill="#ed7d31"/>
<text x="1418.7" y="274.6" font-size="8.2" fill="#767676" textLength="17.5" lengthAdjust="spacingAndGlyphs">kWh</text>
<rect x="1160.5" y="302.5" width="417.1" height="224.8" fill="#ffffff" stroke="#d9d9d9" stroke-width="1"/>
<text x="1369" y="325" text-anchor="middle" font-size="14.4" fill="#595959" textLength="102" lengthAdjust="spacingAndGlyphs">Titolo del grafico</text>
<rect x="1186.2" y="477.80" width="379.4" height="1" fill="#d9d9d9"/>
<text x="1177.4" y="481.30" text-anchor="end" font-size="8.2" fill="#767676">0</text>
<rect x="1186.2" y="460.71" width="379.4" height="1" fill="#d9d9d9"/>
<text x="1177.4" y="464.21" text-anchor="end" font-size="8.2" fill="#767676">10</text>
<rect x="1186.2" y="443.62" width="379.4" height="1" fill="#d9d9d9"/>
<text x="1177.4" y="447.12" text-anchor="end" font-size="8.2" fill="#767676">20</text>
<rect x="1186.2" y="426.53" width="379.4" height="1" fill="#d9d9d9"/>
<text x="1177.4" y="430.03" text-anchor="end" font-size="8.2" fill="#767676">30</text>
<rect x="1186.2" y="409.44" width="379.4" height="1" fill="#d9d9d9"/>
<text x="1177.4" y="412.94" text-anchor="end" font-size="8.2" fill="#767676">40</text>
<rect x="1186.2" y="392.35" width="379.4" height="1" fill="#d9d9d9"/>
<text x="1177.4" y="395.85" text-anchor="end" font-size="8.2" fill="#767676">50</text>
<rect x="1186.2" y="375.26" width="379.4" height="1" fill="#d9d9d9"/>
<text x="1177.4" y="378.76" text-anchor="end" font-size="8.2" fill="#767676">60</text>
<rect x="1186.2" y="358.17" width="379.4" height="1" fill="#d9d9d9"/>
<text x="1177.4" y="361.67" text-anchor="end" font-size="8.2" fill="#767676">70</text>
<rect x="1186.2" y="341.08" width="379.4" height="1" fill="#d9d9d9"/>
<text x="1177.4" y="344.58" text-anchor="end" font-size="8.2" fill="#767676">80</text>
<polyline points="1193.79,370.63 1208.96,401.39 1224.14,380.89 1239.32,382.60 1254.49,380.89 1269.67,394.56 1284.84,399.69 1300.02,379.18 1315.20,423.61 1330.37,386.01 1345.55,382.60 1360.72,428.74 1375.90,409.94 1391.08,387.72 1406.25,399.69 1421.43,442.41 1436.60,370.63 1451.78,401.39 1466.96,386.01 1482.13,380.89 1497.31,418.49 1512.48,355.25 1527.66,389.43 1542.84,409.94 1558.01,438.99" fill="none" stroke="#5b9bd5" stroke-width="2.2" stroke-linejoin="round" stroke-linecap="round"/>
<polyline points="1193.79,442.29 1208.96,443.66 1224.14,444.36 1239.32,436.69 1254.49,444.71 1269.67,445.20 1284.84,445.82 1300.02,428.74 1315.20,447.23 1330.37,415.09 1345.55,435.57 1360.72,453.52 1375.90,444.12 1391.08,443.86 1406.25,442.40 1421.43,433.44 1436.60,440.92 1451.78,443.02 1466.96,478.30 1482.13,442.22 1497.31,444.70 1512.48,434.67 1527.66,417.85 1542.84,443.77 1558.01,460.27" fill="none" stroke="#ed7d31" stroke-width="2.2" stroke-linejoin="round" stroke-linecap="round"/>
<text x="1193.79" y="493.8" text-anchor="middle" font-size="8.2" fill="#767676">1</text>
<text x="1208.96" y="493.8" text-anchor="middle" font-size="8.2" fill="#767676">2</text>
<text x="1224.14" y="493.8" text-anchor="middle" font-size="8.2" fill="#767676">3</text>
<text x="1239.32" y="493.8" text-anchor="middle" font-size="8.2" fill="#767676">4</text>
<text x="1254.49" y="493.8" text-anchor="middle" font-size="8.2" fill="#767676">5</text>
<text x="1269.67" y="493.8" text-anchor="middle" font-size="8.2" fill="#767676">6</text>
<text x="1284.84" y="493.8" text-anchor="middle" font-size="8.2" fill="#767676">7</text>
<text x="1300.02" y="493.8" text-anchor="middle" font-size="8.2" fill="#767676">8</text>
<text x="1315.20" y="493.8" text-anchor="middle" font-size="8.2" fill="#767676">9</text>
<text x="1330.37" y="493.8" text-anchor="middle" font-size="8.2" fill="#767676">10</text>
<text x="1345.55" y="493.8" text-anchor="middle" font-size="8.2" fill="#767676">11</text>
<text x="1360.72" y="493.8" text-anchor="middle" font-size="8.2" fill="#767676">12</text>
<text x="1375.90" y="493.8" text-anchor="middle" font-size="8.2" fill="#767676">13</text>
<text x="1391.08" y="493.8" text-anchor="middle" font-size="8.2" fill="#767676">14</text>
<text x="1406.25" y="493.8" text-anchor="middle" font-size="8.2" fill="#767676">15</text>
<text x="1421.43" y="493.8" text-anchor="middle" font-size="8.2" fill="#767676">16</text>
<text x="1436.60" y="493.8" text-anchor="middle" font-size="8.2" fill="#767676">17</text>
<text x="1451.78" y="493.8" text-anchor="middle" font-size="8.2" fill="#767676">18</text>
<text x="1466.96" y="493.8" text-anchor="middle" font-size="8.2" fill="#767676">19</text>
<text x="1482.13" y="493.8" text-anchor="middle" font-size="8.2" fill="#767676">20</text>
<text x="1497.31" y="493.8" text-anchor="middle" font-size="8.2" fill="#767676">21</text>
<text x="1512.48" y="493.8" text-anchor="middle" font-size="8.2" fill="#767676">22</text>
<text x="1527.66" y="493.8" text-anchor="middle" font-size="8.2" fill="#767676">23</text>
<text x="1542.84" y="493.8" text-anchor="middle" font-size="8.2" fill="#767676">24</text>
<text x="1558.01" y="493.8" text-anchor="middle" font-size="8.2" fill="#767676">25</text>
<rect x="1297" y="511.1" width="22.2" height="2.6" rx="1.3" fill="#5b9bd5"/>
<text x="1320.8" y="515.6" font-size="8.2" fill="#767676" textLength="45.7" lengthAdjust="spacingAndGlyphs">km percorsi</text>
<rect x="1380.3" y="511.1" width="22.6" height="2.6" rx="1.3" fill="#ed7d31"/>
<text x="1404.6" y="515.6" font-size="8.2" fill="#767676" textLength="39.4" lengthAdjust="spacingAndGlyphs">[km/kWh]</text>
</g>
</svg>
</body></html>
